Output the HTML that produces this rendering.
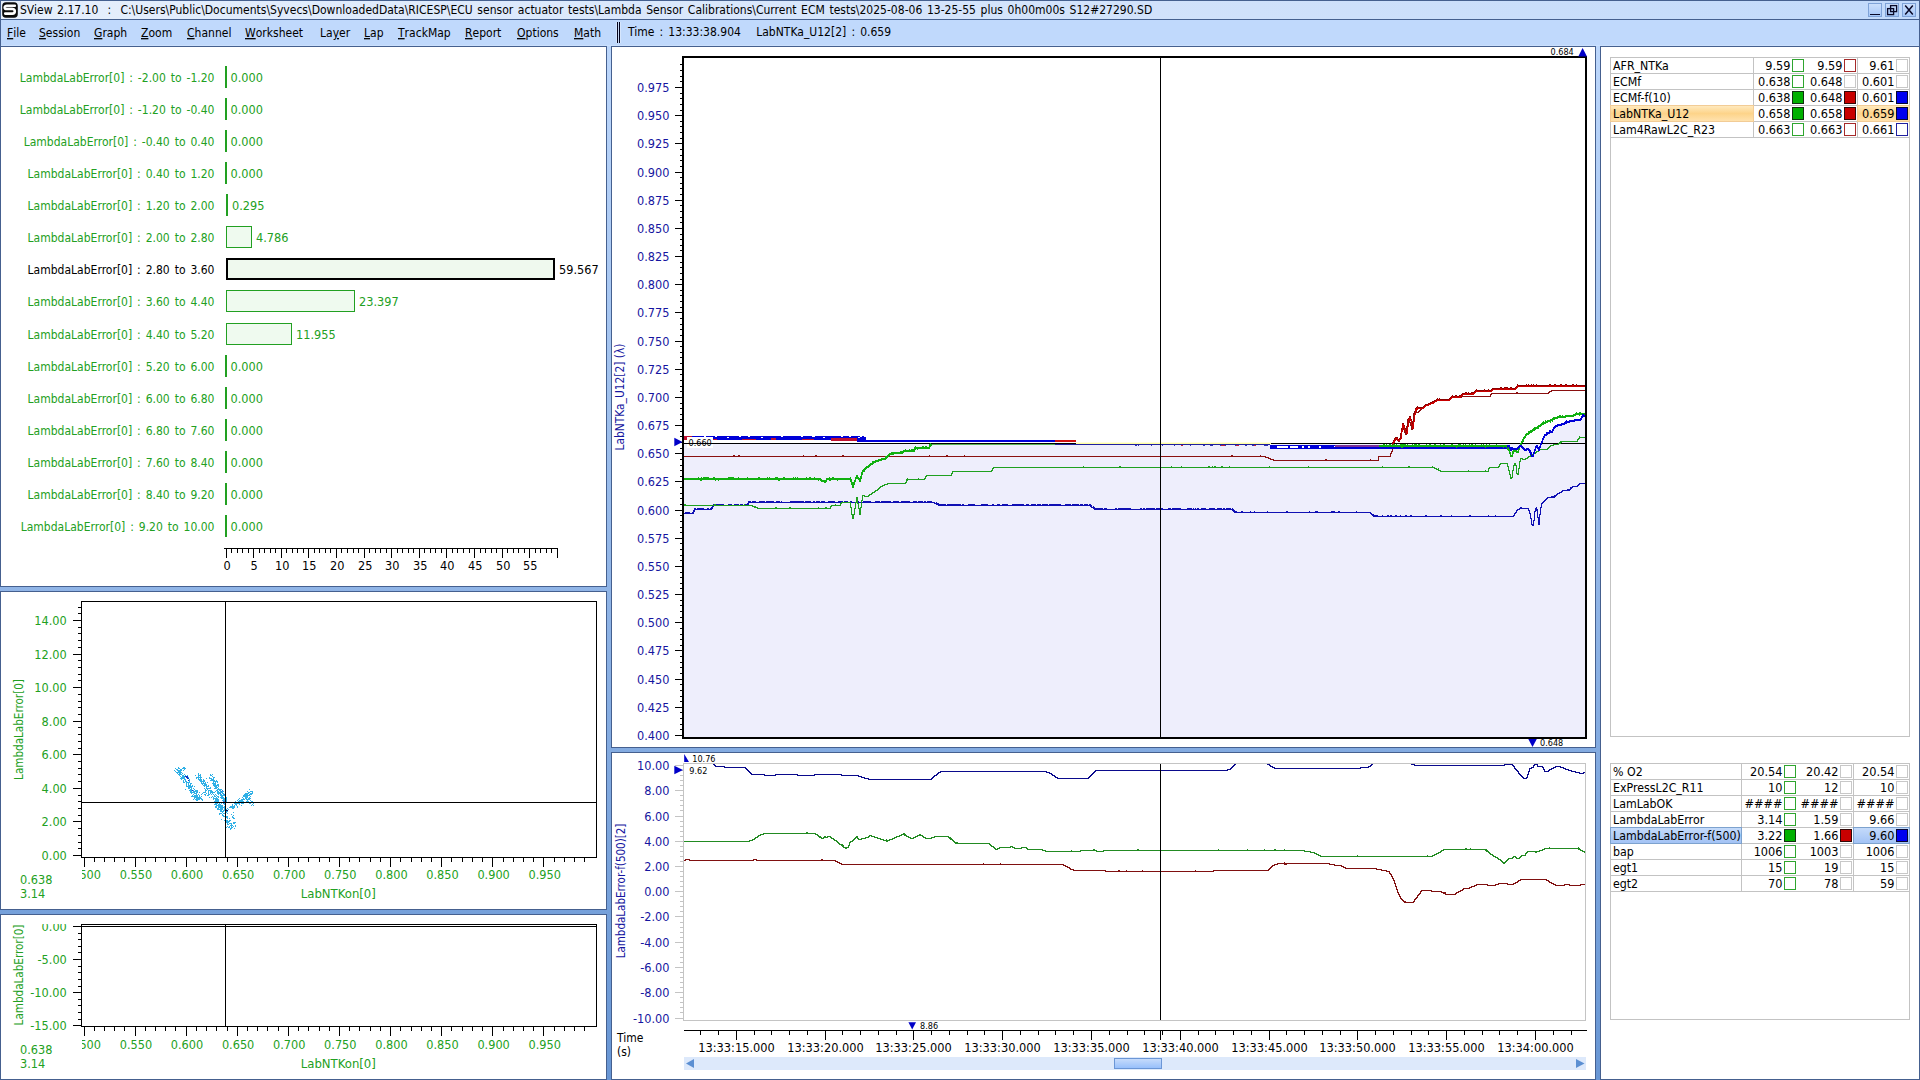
<!DOCTYPE html>
<html lang="en"><head><meta charset="utf-8"><title>SView 2.17.10</title>
<style>
html,body{margin:0;padding:0;background:#6896d4;overflow:hidden}
body{width:1920px;height:1080px}
svg{display:block;font-family:'DejaVu Sans Condensed','DejaVu Sans','Liberation Sans',sans-serif;font-size:13px}
svg rect,svg path{shape-rendering:crispEdges}
svg polyline{shape-rendering:crispEdges}
svg .aa,svg .aa *{shape-rendering:geometricPrecision}
text{white-space:pre}
</style></head><body>
<svg width="1920" height="1080" viewBox="0 0 1920 1080">
<defs>
<linearGradient id="gBg" x1="0" y1="0" x2="0" y2="1"><stop offset="0" stop-color="#bdd7fb"/><stop offset="1" stop-color="#6896d4"/></linearGradient>
<linearGradient id="gTitle" x1="0" y1="0" x2="1" y2="0"><stop offset="0" stop-color="#e6effc"/><stop offset=".55" stop-color="#d3e3fb"/><stop offset="1" stop-color="#c2dafb"/></linearGradient>
<linearGradient id="gBtn" x1="0" y1="0" x2="0" y2="1"><stop offset="0" stop-color="#cbdffc"/><stop offset="1" stop-color="#a6c7f8"/></linearGradient>
<linearGradient id="gThumb" x1="0" y1="0" x2="0" y2="1"><stop offset="0" stop-color="#c6dbfb"/><stop offset="1" stop-color="#98c0fb"/></linearGradient>
<linearGradient id="gOrange" x1="0" y1="0" x2="0" y2="1"><stop offset="0" stop-color="#ffe9bd"/><stop offset=".5" stop-color="#fdd48a"/><stop offset="1" stop-color="#ffe2ae"/></linearGradient>
<linearGradient id="gBlue" x1="0" y1="0" x2="0" y2="1"><stop offset="0" stop-color="#c4dafa"/><stop offset="1" stop-color="#a3c3f5"/></linearGradient>
<clipPath id="clipM"><rect x="684" y="58" width="901" height="679"/></clipPath>
<clipPath id="clipL"><rect x="684" y="764" width="901" height="256"/></clipPath>
<clipPath id="clipS"><rect x="82" y="858" width="520" height="30"/></clipPath>
<clipPath id="clipS2"><rect x="82" y="1027" width="520" height="30"/></clipPath>
<clipPath id="clipT3"><rect x="0" y="924" width="82" height="120"/></clipPath>
</defs>
<rect x="0" y="46" width="1920" height="1034" fill="url(#gBg)"/>
<rect x="0" y="0" width="1920" height="20" fill="#45608f"/>
<rect x="1" y="1" width="1918" height="18" fill="url(#gTitle)"/>
<g class="aa"><rect x="2.2" y="2.2" width="15.6" height="15.6" rx="3.8" fill="#0a0a0a"/>
<path d="M14.8,5.8 H7 C3.9,5.8 3.9,9 7,9 H12.4 C15.6,9 15.6,13.6 12.4,13.6 H5.2" fill="none" stroke="#fff" stroke-width="2.6" stroke-linecap="round"/>
<path d="M5.6,7.4 H12.6" stroke="#8a8a8a" stroke-width=".55" fill="none"/></g>
<text transform="translate(20.00,14.00) scale(0.925,1)" text-anchor="start" fill="#000" font-size="13" word-spacing="1.26">SView 2.17.10  :  C:\Users\Public\Documents\Syvecs\DownloadedData\RICESP\ECU sensor actuator tests\Lambda Sensor Calibrations\Current ECM tests\2025-08-06 13-25-55 plus 0h00m00s S12#27290.SD</text>
<rect x="1868" y="3" width="14" height="14" fill="#7fa3d8"/>
<rect x="1869" y="4" width="12" height="12" fill="url(#gBtn)"/>
<rect x="1885" y="3" width="14" height="14" fill="#7fa3d8"/>
<rect x="1886" y="4" width="12" height="12" fill="url(#gBtn)"/>
<rect x="1902" y="3" width="14" height="14" fill="#7fa3d8"/>
<rect x="1903" y="4" width="12" height="12" fill="url(#gBtn)"/>
<rect x="1870" y="14" width="10" height="1.4" fill="#0a0a28"/>
<g class="aa" fill="none" stroke="#0a0a28" stroke-width="1.3"><rect x="1890.6" y="5.6" width="6" height="6"/><rect x="1887.6" y="8.6" width="6" height="6"/></g>
<path class="aa" d="M1905.2,5.6 L1912.8,14.4 M1912.8,5.6 L1905.2,14.4" stroke="#0a0a28" stroke-width="1.5" fill="none"/>
<rect x="0" y="20" width="1920" height="26" fill="#c0d9fc"/>
<rect x="0" y="20" width="1" height="26" fill="#45608f"/>
<rect x="1919" y="20" width="1" height="26" fill="#45608f"/>
<rect x="1" y="45" width="1918" height="1" fill="#cbe0fd"/>
<text transform="translate(7,37) scale(0.925,1)" font-size="13" fill="#000"><tspan text-decoration="underline">F</tspan>ile</text>
<text transform="translate(39,37) scale(0.925,1)" font-size="13" fill="#000"><tspan text-decoration="underline">S</tspan>ession</text>
<text transform="translate(94,37) scale(0.925,1)" font-size="13" fill="#000"><tspan text-decoration="underline">G</tspan>raph</text>
<text transform="translate(141,37) scale(0.925,1)" font-size="13" fill="#000"><tspan text-decoration="underline">Z</tspan>oom</text>
<text transform="translate(187,37) scale(0.925,1)" font-size="13" fill="#000"><tspan text-decoration="underline">C</tspan>hannel</text>
<text transform="translate(245,37) scale(0.925,1)" font-size="13" fill="#000"><tspan text-decoration="underline">W</tspan>orksheet</text>
<text transform="translate(320,37) scale(0.925,1)" font-size="13" fill="#000">La<tspan text-decoration="underline">y</tspan>er</text>
<text transform="translate(364,37) scale(0.925,1)" font-size="13" fill="#000"><tspan text-decoration="underline">L</tspan>ap</text>
<text transform="translate(398,37) scale(0.925,1)" font-size="13" fill="#000"><tspan text-decoration="underline">T</tspan>rackMap</text>
<text transform="translate(465,37) scale(0.925,1)" font-size="13" fill="#000"><tspan text-decoration="underline">R</tspan>eport</text>
<text transform="translate(517,37) scale(0.925,1)" font-size="13" fill="#000"><tspan text-decoration="underline">O</tspan>ptions</text>
<text transform="translate(574,37) scale(0.925,1)" font-size="13" fill="#000"><tspan text-decoration="underline">M</tspan>ath</text>
<rect x="616" y="22" width="1" height="21" fill="#d6e6fd"/>
<rect x="617" y="22" width="1" height="21" fill="#05051e"/>
<rect x="618" y="22" width="1" height="21" fill="#c9d9f2"/>
<rect x="619" y="22" width="1" height="21" fill="#05051e"/>
<rect x="620" y="22" width="1" height="21" fill="#d6e6fd"/>
<text transform="translate(628.00,36.00) scale(0.925,1)" text-anchor="start" fill="#000" font-size="13" word-spacing="1.8">Time : 13:33:38.904   LabNTKa_U12[2] : 0.659</text>
<rect x="0" y="46" width="607" height="541" fill="#45608f"/>
<rect x="1" y="47" width="605" height="539" fill="#fff"/>
<text transform="translate(214.50,82.00) scale(0.925,1)" text-anchor="end" fill="#22a022" font-size="13" word-spacing="1.6">LambdaLabError[0] : -2.00 to -1.20</text>
<rect x="225" y="66" width="2" height="22" fill="#22a022"/>
<text transform="translate(230.50,82.00) scale(0.97,1)" text-anchor="start" fill="#22a022" font-size="13">0.000</text>
<text transform="translate(214.50,114.00) scale(0.925,1)" text-anchor="end" fill="#22a022" font-size="13" word-spacing="1.6">LambdaLabError[0] : -1.20 to -0.40</text>
<rect x="225" y="98" width="2" height="22" fill="#22a022"/>
<text transform="translate(230.50,114.00) scale(0.97,1)" text-anchor="start" fill="#22a022" font-size="13">0.000</text>
<text transform="translate(214.50,146.00) scale(0.925,1)" text-anchor="end" fill="#22a022" font-size="13" word-spacing="1.6">LambdaLabError[0] : -0.40 to 0.40</text>
<rect x="225" y="130" width="2" height="22" fill="#22a022"/>
<text transform="translate(230.50,146.00) scale(0.97,1)" text-anchor="start" fill="#22a022" font-size="13">0.000</text>
<text transform="translate(214.50,178.00) scale(0.925,1)" text-anchor="end" fill="#22a022" font-size="13" word-spacing="1.6">LambdaLabError[0] : 0.40 to 1.20</text>
<rect x="225" y="162" width="2" height="22" fill="#22a022"/>
<text transform="translate(230.50,178.00) scale(0.97,1)" text-anchor="start" fill="#22a022" font-size="13">0.000</text>
<text transform="translate(214.50,210.00) scale(0.925,1)" text-anchor="end" fill="#22a022" font-size="13" word-spacing="1.6">LambdaLabError[0] : 1.20 to 2.00</text>
<rect x="226" y="194" width="2" height="22" fill="#22a022"/>
<text transform="translate(232.00,210.00) scale(0.97,1)" text-anchor="start" fill="#22a022" font-size="13">0.295</text>
<text transform="translate(214.50,242.00) scale(0.925,1)" text-anchor="end" fill="#22a022" font-size="13" word-spacing="1.6">LambdaLabError[0] : 2.00 to 2.80</text>
<rect x="226" y="226" width="26" height="22" fill="#22a022"/>
<rect x="227" y="227" width="24" height="20" fill="#effaef"/>
<text transform="translate(256.00,242.00) scale(0.97,1)" text-anchor="start" fill="#22a022" font-size="13">4.786</text>
<text transform="translate(214.50,274.00) scale(0.925,1)" text-anchor="end" fill="#000" font-size="13" word-spacing="1.6">LambdaLabError[0] : 2.80 to 3.60</text>
<rect x="226" y="258" width="329" height="22" fill="#000"/>
<rect x="228" y="260" width="325" height="18" fill="#eff9ee"/>
<text transform="translate(559.00,274.00) scale(0.97,1)" text-anchor="start" fill="#000" font-size="13">59.567</text>
<text transform="translate(214.50,306.00) scale(0.925,1)" text-anchor="end" fill="#22a022" font-size="13" word-spacing="1.6">LambdaLabError[0] : 3.60 to 4.40</text>
<rect x="226" y="290" width="129" height="22" fill="#22a022"/>
<rect x="227" y="291" width="127" height="20" fill="#effaef"/>
<text transform="translate(359.00,306.00) scale(0.97,1)" text-anchor="start" fill="#22a022" font-size="13">23.397</text>
<text transform="translate(214.50,339.00) scale(0.925,1)" text-anchor="end" fill="#22a022" font-size="13" word-spacing="1.6">LambdaLabError[0] : 4.40 to 5.20</text>
<rect x="226" y="323" width="66" height="22" fill="#22a022"/>
<rect x="227" y="324" width="64" height="20" fill="#effaef"/>
<text transform="translate(296.00,339.00) scale(0.97,1)" text-anchor="start" fill="#22a022" font-size="13">11.955</text>
<text transform="translate(214.50,371.00) scale(0.925,1)" text-anchor="end" fill="#22a022" font-size="13" word-spacing="1.6">LambdaLabError[0] : 5.20 to 6.00</text>
<rect x="225" y="355" width="2" height="22" fill="#22a022"/>
<text transform="translate(230.50,371.00) scale(0.97,1)" text-anchor="start" fill="#22a022" font-size="13">0.000</text>
<text transform="translate(214.50,403.00) scale(0.925,1)" text-anchor="end" fill="#22a022" font-size="13" word-spacing="1.6">LambdaLabError[0] : 6.00 to 6.80</text>
<rect x="225" y="387" width="2" height="22" fill="#22a022"/>
<text transform="translate(230.50,403.00) scale(0.97,1)" text-anchor="start" fill="#22a022" font-size="13">0.000</text>
<text transform="translate(214.50,435.00) scale(0.925,1)" text-anchor="end" fill="#22a022" font-size="13" word-spacing="1.6">LambdaLabError[0] : 6.80 to 7.60</text>
<rect x="225" y="419" width="2" height="22" fill="#22a022"/>
<text transform="translate(230.50,435.00) scale(0.97,1)" text-anchor="start" fill="#22a022" font-size="13">0.000</text>
<text transform="translate(214.50,467.00) scale(0.925,1)" text-anchor="end" fill="#22a022" font-size="13" word-spacing="1.6">LambdaLabError[0] : 7.60 to 8.40</text>
<rect x="225" y="451" width="2" height="22" fill="#22a022"/>
<text transform="translate(230.50,467.00) scale(0.97,1)" text-anchor="start" fill="#22a022" font-size="13">0.000</text>
<text transform="translate(214.50,499.00) scale(0.925,1)" text-anchor="end" fill="#22a022" font-size="13" word-spacing="1.6">LambdaLabError[0] : 8.40 to 9.20</text>
<rect x="225" y="483" width="2" height="22" fill="#22a022"/>
<text transform="translate(230.50,499.00) scale(0.97,1)" text-anchor="start" fill="#22a022" font-size="13">0.000</text>
<text transform="translate(214.50,531.00) scale(0.925,1)" text-anchor="end" fill="#22a022" font-size="13" word-spacing="1.6">LambdaLabError[0] : 9.20 to 10.00</text>
<rect x="225" y="515" width="2" height="22" fill="#22a022"/>
<text transform="translate(230.50,531.00) scale(0.97,1)" text-anchor="start" fill="#22a022" font-size="13">0.000</text>
<rect x="224" y="548" width="334" height="1" fill="#000"/>
<rect x="226" y="548" width="1" height="10" fill="#000"/>
<text transform="translate(227.20,570.00) scale(0.97,1)" text-anchor="middle" fill="#000" font-size="13">0</text>
<rect x="231" y="548" width="1" height="5" fill="#000"/>
<rect x="237" y="548" width="1" height="5" fill="#000"/>
<rect x="242" y="548" width="1" height="5" fill="#000"/>
<rect x="248" y="548" width="1" height="5" fill="#000"/>
<rect x="253" y="548" width="1" height="10" fill="#000"/>
<text transform="translate(254.20,570.00) scale(0.97,1)" text-anchor="middle" fill="#000" font-size="13">5</text>
<rect x="259" y="548" width="1" height="5" fill="#000"/>
<rect x="264" y="548" width="1" height="5" fill="#000"/>
<rect x="270" y="548" width="1" height="5" fill="#000"/>
<rect x="275" y="548" width="1" height="5" fill="#000"/>
<rect x="281" y="548" width="1" height="10" fill="#000"/>
<text transform="translate(282.20,570.00) scale(0.97,1)" text-anchor="middle" fill="#000" font-size="13">10</text>
<rect x="286" y="548" width="1" height="5" fill="#000"/>
<rect x="292" y="548" width="1" height="5" fill="#000"/>
<rect x="297" y="548" width="1" height="5" fill="#000"/>
<rect x="303" y="548" width="1" height="5" fill="#000"/>
<rect x="308" y="548" width="1" height="10" fill="#000"/>
<text transform="translate(309.20,570.00) scale(0.97,1)" text-anchor="middle" fill="#000" font-size="13">15</text>
<rect x="314" y="548" width="1" height="5" fill="#000"/>
<rect x="319" y="548" width="1" height="5" fill="#000"/>
<rect x="325" y="548" width="1" height="5" fill="#000"/>
<rect x="330" y="548" width="1" height="5" fill="#000"/>
<rect x="336" y="548" width="1" height="10" fill="#000"/>
<text transform="translate(337.20,570.00) scale(0.97,1)" text-anchor="middle" fill="#000" font-size="13">20</text>
<rect x="341" y="548" width="1" height="5" fill="#000"/>
<rect x="347" y="548" width="1" height="5" fill="#000"/>
<rect x="353" y="548" width="1" height="5" fill="#000"/>
<rect x="358" y="548" width="1" height="5" fill="#000"/>
<rect x="364" y="548" width="1" height="10" fill="#000"/>
<text transform="translate(365.20,570.00) scale(0.97,1)" text-anchor="middle" fill="#000" font-size="13">25</text>
<rect x="369" y="548" width="1" height="5" fill="#000"/>
<rect x="375" y="548" width="1" height="5" fill="#000"/>
<rect x="380" y="548" width="1" height="5" fill="#000"/>
<rect x="386" y="548" width="1" height="5" fill="#000"/>
<rect x="391" y="548" width="1" height="10" fill="#000"/>
<text transform="translate(392.20,570.00) scale(0.97,1)" text-anchor="middle" fill="#000" font-size="13">30</text>
<rect x="397" y="548" width="1" height="5" fill="#000"/>
<rect x="402" y="548" width="1" height="5" fill="#000"/>
<rect x="408" y="548" width="1" height="5" fill="#000"/>
<rect x="413" y="548" width="1" height="5" fill="#000"/>
<rect x="419" y="548" width="1" height="10" fill="#000"/>
<text transform="translate(420.20,570.00) scale(0.97,1)" text-anchor="middle" fill="#000" font-size="13">35</text>
<rect x="424" y="548" width="1" height="5" fill="#000"/>
<rect x="430" y="548" width="1" height="5" fill="#000"/>
<rect x="435" y="548" width="1" height="5" fill="#000"/>
<rect x="441" y="548" width="1" height="5" fill="#000"/>
<rect x="446" y="548" width="1" height="10" fill="#000"/>
<text transform="translate(447.20,570.00) scale(0.97,1)" text-anchor="middle" fill="#000" font-size="13">40</text>
<rect x="452" y="548" width="1" height="5" fill="#000"/>
<rect x="457" y="548" width="1" height="5" fill="#000"/>
<rect x="463" y="548" width="1" height="5" fill="#000"/>
<rect x="469" y="548" width="1" height="5" fill="#000"/>
<rect x="474" y="548" width="1" height="10" fill="#000"/>
<text transform="translate(475.20,570.00) scale(0.97,1)" text-anchor="middle" fill="#000" font-size="13">45</text>
<rect x="480" y="548" width="1" height="5" fill="#000"/>
<rect x="485" y="548" width="1" height="5" fill="#000"/>
<rect x="491" y="548" width="1" height="5" fill="#000"/>
<rect x="496" y="548" width="1" height="5" fill="#000"/>
<rect x="502" y="548" width="1" height="10" fill="#000"/>
<text transform="translate(503.20,570.00) scale(0.97,1)" text-anchor="middle" fill="#000" font-size="13">50</text>
<rect x="507" y="548" width="1" height="5" fill="#000"/>
<rect x="513" y="548" width="1" height="5" fill="#000"/>
<rect x="518" y="548" width="1" height="5" fill="#000"/>
<rect x="524" y="548" width="1" height="5" fill="#000"/>
<rect x="529" y="548" width="1" height="10" fill="#000"/>
<text transform="translate(530.20,570.00) scale(0.97,1)" text-anchor="middle" fill="#000" font-size="13">55</text>
<rect x="535" y="548" width="1" height="5" fill="#000"/>
<rect x="540" y="548" width="1" height="5" fill="#000"/>
<rect x="546" y="548" width="1" height="5" fill="#000"/>
<rect x="551" y="548" width="1" height="5" fill="#000"/>
<rect x="557" y="548" width="1" height="10" fill="#000"/>
<rect x="0" y="591" width="607" height="319" fill="#45608f"/>
<rect x="1" y="592" width="605" height="317" fill="#fff"/>
<rect x="81" y="601" width="516" height="257" fill="#000"/>
<rect x="82" y="602" width="514" height="255" fill="#fff"/>
<rect x="73" y="855" width="8" height="1" fill="#000"/>
<text transform="translate(66.80,860.00) scale(0.97,1)" text-anchor="end" fill="#22a022" font-size="13">0.00</text>
<rect x="78" y="848" width="3" height="1" fill="#000"/>
<rect x="78" y="842" width="3" height="1" fill="#000"/>
<rect x="78" y="835" width="3" height="1" fill="#000"/>
<rect x="78" y="828" width="3" height="1" fill="#000"/>
<rect x="73" y="821" width="8" height="1" fill="#000"/>
<text transform="translate(66.80,826.00) scale(0.97,1)" text-anchor="end" fill="#22a022" font-size="13">2.00</text>
<rect x="78" y="815" width="3" height="1" fill="#000"/>
<rect x="78" y="808" width="3" height="1" fill="#000"/>
<rect x="78" y="801" width="3" height="1" fill="#000"/>
<rect x="78" y="795" width="3" height="1" fill="#000"/>
<rect x="73" y="788" width="8" height="1" fill="#000"/>
<text transform="translate(66.80,793.00) scale(0.97,1)" text-anchor="end" fill="#22a022" font-size="13">4.00</text>
<rect x="78" y="781" width="3" height="1" fill="#000"/>
<rect x="78" y="774" width="3" height="1" fill="#000"/>
<rect x="78" y="768" width="3" height="1" fill="#000"/>
<rect x="78" y="761" width="3" height="1" fill="#000"/>
<rect x="73" y="754" width="8" height="1" fill="#000"/>
<text transform="translate(66.80,759.00) scale(0.97,1)" text-anchor="end" fill="#22a022" font-size="13">6.00</text>
<rect x="78" y="748" width="3" height="1" fill="#000"/>
<rect x="78" y="741" width="3" height="1" fill="#000"/>
<rect x="78" y="734" width="3" height="1" fill="#000"/>
<rect x="78" y="727" width="3" height="1" fill="#000"/>
<rect x="73" y="721" width="8" height="1" fill="#000"/>
<text transform="translate(66.80,726.00) scale(0.97,1)" text-anchor="end" fill="#22a022" font-size="13">8.00</text>
<rect x="78" y="714" width="3" height="1" fill="#000"/>
<rect x="78" y="707" width="3" height="1" fill="#000"/>
<rect x="78" y="701" width="3" height="1" fill="#000"/>
<rect x="78" y="694" width="3" height="1" fill="#000"/>
<rect x="73" y="687" width="8" height="1" fill="#000"/>
<text transform="translate(66.80,692.00) scale(0.97,1)" text-anchor="end" fill="#22a022" font-size="13">10.00</text>
<rect x="78" y="680" width="3" height="1" fill="#000"/>
<rect x="78" y="674" width="3" height="1" fill="#000"/>
<rect x="78" y="667" width="3" height="1" fill="#000"/>
<rect x="78" y="660" width="3" height="1" fill="#000"/>
<rect x="73" y="654" width="8" height="1" fill="#000"/>
<text transform="translate(66.80,659.00) scale(0.97,1)" text-anchor="end" fill="#22a022" font-size="13">12.00</text>
<rect x="78" y="647" width="3" height="1" fill="#000"/>
<rect x="78" y="640" width="3" height="1" fill="#000"/>
<rect x="78" y="633" width="3" height="1" fill="#000"/>
<rect x="78" y="627" width="3" height="1" fill="#000"/>
<rect x="73" y="620" width="8" height="1" fill="#000"/>
<text transform="translate(66.80,625.00) scale(0.97,1)" text-anchor="end" fill="#22a022" font-size="13">14.00</text>
<rect x="78" y="613" width="3" height="1" fill="#000"/>
<rect x="78" y="607" width="3" height="1" fill="#000"/>
<rect x="84" y="858" width="1" height="9" fill="#000"/>
<rect x="94" y="858" width="1" height="4" fill="#000"/>
<rect x="104" y="858" width="1" height="4" fill="#000"/>
<rect x="114" y="858" width="1" height="4" fill="#000"/>
<rect x="124" y="858" width="1" height="4" fill="#000"/>
<rect x="135" y="858" width="1" height="9" fill="#000"/>
<rect x="145" y="858" width="1" height="4" fill="#000"/>
<rect x="155" y="858" width="1" height="4" fill="#000"/>
<rect x="165" y="858" width="1" height="4" fill="#000"/>
<rect x="175" y="858" width="1" height="4" fill="#000"/>
<rect x="186" y="858" width="1" height="9" fill="#000"/>
<rect x="196" y="858" width="1" height="4" fill="#000"/>
<rect x="206" y="858" width="1" height="4" fill="#000"/>
<rect x="216" y="858" width="1" height="4" fill="#000"/>
<rect x="227" y="858" width="1" height="4" fill="#000"/>
<rect x="237" y="858" width="1" height="9" fill="#000"/>
<rect x="247" y="858" width="1" height="4" fill="#000"/>
<rect x="257" y="858" width="1" height="4" fill="#000"/>
<rect x="267" y="858" width="1" height="4" fill="#000"/>
<rect x="278" y="858" width="1" height="4" fill="#000"/>
<rect x="288" y="858" width="1" height="9" fill="#000"/>
<rect x="298" y="858" width="1" height="4" fill="#000"/>
<rect x="308" y="858" width="1" height="4" fill="#000"/>
<rect x="319" y="858" width="1" height="4" fill="#000"/>
<rect x="329" y="858" width="1" height="4" fill="#000"/>
<rect x="339" y="858" width="1" height="9" fill="#000"/>
<rect x="349" y="858" width="1" height="4" fill="#000"/>
<rect x="359" y="858" width="1" height="4" fill="#000"/>
<rect x="370" y="858" width="1" height="4" fill="#000"/>
<rect x="380" y="858" width="1" height="4" fill="#000"/>
<rect x="390" y="858" width="1" height="9" fill="#000"/>
<rect x="400" y="858" width="1" height="4" fill="#000"/>
<rect x="411" y="858" width="1" height="4" fill="#000"/>
<rect x="421" y="858" width="1" height="4" fill="#000"/>
<rect x="431" y="858" width="1" height="4" fill="#000"/>
<rect x="441" y="858" width="1" height="9" fill="#000"/>
<rect x="451" y="858" width="1" height="4" fill="#000"/>
<rect x="462" y="858" width="1" height="4" fill="#000"/>
<rect x="472" y="858" width="1" height="4" fill="#000"/>
<rect x="482" y="858" width="1" height="4" fill="#000"/>
<rect x="492" y="858" width="1" height="9" fill="#000"/>
<rect x="503" y="858" width="1" height="4" fill="#000"/>
<rect x="513" y="858" width="1" height="4" fill="#000"/>
<rect x="523" y="858" width="1" height="4" fill="#000"/>
<rect x="533" y="858" width="1" height="4" fill="#000"/>
<rect x="543" y="858" width="1" height="9" fill="#000"/>
<rect x="554" y="858" width="1" height="4" fill="#000"/>
<rect x="564" y="858" width="1" height="4" fill="#000"/>
<rect x="574" y="858" width="1" height="4" fill="#000"/>
<rect x="584" y="858" width="1" height="4" fill="#000"/>
<g clip-path="url(#clipS)">
<text transform="translate(84.80,879.00) scale(0.97,1)" text-anchor="middle" fill="#22a022" font-size="13">0.500</text>
<text transform="translate(135.90,879.00) scale(0.97,1)" text-anchor="middle" fill="#22a022" font-size="13">0.550</text>
<text transform="translate(187.00,879.00) scale(0.97,1)" text-anchor="middle" fill="#22a022" font-size="13">0.600</text>
<text transform="translate(238.10,879.00) scale(0.97,1)" text-anchor="middle" fill="#22a022" font-size="13">0.650</text>
<text transform="translate(289.20,879.00) scale(0.97,1)" text-anchor="middle" fill="#22a022" font-size="13">0.700</text>
<text transform="translate(340.30,879.00) scale(0.97,1)" text-anchor="middle" fill="#22a022" font-size="13">0.750</text>
<text transform="translate(391.40,879.00) scale(0.97,1)" text-anchor="middle" fill="#22a022" font-size="13">0.800</text>
<text transform="translate(442.50,879.00) scale(0.97,1)" text-anchor="middle" fill="#22a022" font-size="13">0.850</text>
<text transform="translate(493.60,879.00) scale(0.97,1)" text-anchor="middle" fill="#22a022" font-size="13">0.900</text>
<text transform="translate(544.70,879.00) scale(0.97,1)" text-anchor="middle" fill="#22a022" font-size="13">0.950</text>
</g>
<text transform="translate(20.00,884.00) scale(0.97,1)" text-anchor="start" fill="#22a022" font-size="13">0.638</text>
<text transform="translate(20.00,898.00) scale(0.97,1)" text-anchor="start" fill="#22a022" font-size="13">3.14</text>
<text transform="translate(338.30,898.00) scale(1.0,1)" text-anchor="middle" fill="#22a022" font-size="13">LabNTKon[0]</text>
<text transform="translate(23.10,729.50) rotate(-90) scale(0.892,1)" text-anchor="middle" fill="#22a022" font-size="13">LambdaLabError[0]</text>
<path fill="#2fb0e6" d="M185,780h1v1h-1zM177,770h1v1h-1zM178,770h1v1h-1zM187,782h1v1h-1zM186,781h1v1h-1zM179,772h1v1h-1zM185,789h1v1h-1zM179,768h1v1h-1zM181,774h1v1h-1zM195,796h1v1h-1zM189,790h1v1h-1zM179,770h1v1h-1zM190,790h1v1h-1zM188,787h1v1h-1zM193,792h1v1h-1zM186,786h1v1h-1zM191,796h1v1h-1zM177,773h1v1h-1zM180,773h1v1h-1zM191,787h1v1h-1zM194,798h1v1h-1zM188,786h1v1h-1zM196,794h1v1h-1zM193,790h1v1h-1zM194,789h1v1h-1zM181,779h1v1h-1zM176,769h1v1h-1zM182,773h1v1h-1zM180,774h1v1h-1zM197,797h1v1h-1zM191,783h1v1h-1zM195,797h1v1h-1zM188,777h1v1h-1zM180,776h1v1h-1zM184,776h1v1h-1zM181,778h1v1h-1zM195,791h1v1h-1zM196,791h1v1h-1zM185,781h1v1h-1zM191,789h1v1h-1zM182,776h1v1h-1zM195,795h1v1h-1zM181,777h1v1h-1zM183,768h1v1h-1zM186,783h1v1h-1zM178,772h1v1h-1zM196,798h1v1h-1zM190,786h1v1h-1zM199,797h1v1h-1zM182,777h1v1h-1zM190,792h1v1h-1zM184,782h1v1h-1zM200,797h1v1h-1zM194,793h1v1h-1zM188,785h1v1h-1zM201,798h1v1h-1zM197,795h1v1h-1zM191,788h1v1h-1zM193,788h1v1h-1zM192,792h1v1h-1zM192,796h1v1h-1zM196,800h1v1h-1zM182,775h1v1h-1zM196,796h1v1h-1zM197,798h1v1h-1zM189,786h1v1h-1zM196,797h1v1h-1zM193,799h1v1h-1zM183,780h1v1h-1zM195,799h1v1h-1zM191,786h1v1h-1zM194,797h1v1h-1zM190,785h1v1h-1zM184,774h1v1h-1zM178,774h1v1h-1zM188,788h1v1h-1zM189,785h1v1h-1zM189,787h1v1h-1zM191,793h1v1h-1zM190,791h1v1h-1zM189,782h1v1h-1zM197,796h1v1h-1zM192,785h1v1h-1zM179,771h1v1h-1zM192,786h1v1h-1zM180,771h1v1h-1zM183,770h1v1h-1zM183,775h1v1h-1zM190,783h1v1h-1zM179,774h1v1h-1zM194,791h1v1h-1zM188,782h1v1h-1zM189,788h1v1h-1zM199,795h1v1h-1zM193,794h1v1h-1zM189,780h1v1h-1zM185,779h1v1h-1zM178,768h1v1h-1zM181,769h1v1h-1zM180,769h1v1h-1zM180,778h1v1h-1zM184,778h1v1h-1zM183,776h1v1h-1zM178,771h1v1h-1zM177,769h1v1h-1zM191,791h1v1h-1zM188,783h1v1h-1zM192,795h1v1h-1zM193,796h1v1h-1zM194,792h1v1h-1zM183,777h1v1h-1zM196,793h1v1h-1zM183,778h1v1h-1zM188,784h1v1h-1zM187,775h1v1h-1zM183,781h1v1h-1zM184,777h1v1h-1zM191,790h1v1h-1zM199,802h1v1h-1zM194,795h1v1h-1zM189,781h1v1h-1zM190,784h1v1h-1zM191,792h1v1h-1zM196,799h1v1h-1zM190,787h1v1h-1zM186,785h1v1h-1zM198,799h1v1h-1zM189,779h1v1h-1zM186,784h1v1h-1zM197,800h1v1h-1zM176,772h1v1h-1zM181,770h1v1h-1zM175,768h1v1h-1zM184,779h1v1h-1zM193,791h1v1h-1zM182,778h1v1h-1zM197,799h1v1h-1zM186,782h1v1h-1zM180,770h1v1h-1zM194,786h1v1h-1zM190,789h1v1h-1zM183,782h1v1h-1zM197,802h1v1h-1zM198,797h1v1h-1zM179,775h1v1h-1zM187,786h1v1h-1zM177,772h1v1h-1zM199,796h1v1h-1zM174,770h1v1h-1zM197,791h1v1h-1zM181,772h1v1h-1zM194,796h1v1h-1zM185,775h1v1h-1zM182,768h1v1h-1zM184,769h1v1h-1zM185,768h1v1h-1zM180,772h1v1h-1zM184,768h1v1h-1zM184,767h1v1h-1zM175,771h1v1h-1zM183,767h1v1h-1zM178,767h1v1h-1zM179,773h1v1h-1zM201,796h1v1h-1zM202,800h1v1h-1zM201,794h1v1h-1zM198,794h1v1h-1zM195,793h1v1h-1zM201,799h1v1h-1zM196,792h1v1h-1zM196,790h1v1h-1zM197,790h1v1h-1zM198,798h1v1h-1zM199,792h1v1h-1zM202,799h1v1h-1zM196,795h1v1h-1zM199,799h1v1h-1zM200,798h1v1h-1zM197,792h1v1h-1zM199,798h1v1h-1zM195,790h1v1h-1zM200,780h1v1h-1zM206,778h1v1h-1zM203,783h1v1h-1zM203,779h1v1h-1zM204,781h1v1h-1zM208,790h1v1h-1zM195,775h1v1h-1zM212,792h1v1h-1zM201,781h1v1h-1zM198,779h1v1h-1zM196,777h1v1h-1zM211,792h1v1h-1zM212,791h1v1h-1zM199,775h1v1h-1zM208,788h1v1h-1zM199,777h1v1h-1zM204,780h1v1h-1zM204,784h1v1h-1zM200,776h1v1h-1zM198,775h1v1h-1zM203,785h1v1h-1zM200,781h1v1h-1zM202,781h1v1h-1zM205,783h1v1h-1zM204,786h1v1h-1zM207,789h1v1h-1zM204,783h1v1h-1zM206,784h1v1h-1zM198,774h1v1h-1zM203,781h1v1h-1zM211,790h1v1h-1zM210,793h1v1h-1zM207,782h1v1h-1zM200,774h1v1h-1zM196,778h1v1h-1zM200,777h1v1h-1zM210,790h1v1h-1zM210,792h1v1h-1zM207,786h1v1h-1zM209,790h1v1h-1zM204,788h1v1h-1zM202,783h1v1h-1zM201,777h1v1h-1zM210,791h1v1h-1zM207,788h1v1h-1zM210,788h1v1h-1zM198,776h1v1h-1zM205,784h1v1h-1zM206,786h1v1h-1zM203,782h1v1h-1zM198,778h1v1h-1zM201,779h1v1h-1zM203,780h1v1h-1zM205,782h1v1h-1zM204,785h1v1h-1zM198,777h1v1h-1zM206,785h1v1h-1zM198,773h1v1h-1zM201,780h1v1h-1zM208,785h1v1h-1zM199,779h1v1h-1zM200,775h1v1h-1zM206,790h1v1h-1zM202,784h1v1h-1zM208,792h1v1h-1zM208,786h1v1h-1zM206,787h1v1h-1zM200,778h1v1h-1zM205,785h1v1h-1zM209,788h1v1h-1zM200,779h1v1h-1zM210,787h1v1h-1zM199,780h1v1h-1zM197,777h1v1h-1zM206,788h1v1h-1zM208,791h1v1h-1zM211,791h1v1h-1zM201,783h1v1h-1zM208,793h1v1h-1zM201,782h1v1h-1zM205,789h1v1h-1zM208,795h1v1h-1zM204,794h1v1h-1zM205,790h1v1h-1zM205,794h1v1h-1zM205,795h1v1h-1zM204,792h1v1h-1zM209,794h1v1h-1zM206,793h1v1h-1zM208,794h1v1h-1zM203,792h1v1h-1zM209,797h1v1h-1zM205,792h1v1h-1zM207,795h1v1h-1zM211,797h1v1h-1zM202,793h1v1h-1zM205,791h1v1h-1zM217,784h1v1h-1zM216,787h1v1h-1zM211,779h1v1h-1zM223,794h1v1h-1zM219,789h1v1h-1zM213,778h1v1h-1zM221,792h1v1h-1zM219,792h1v1h-1zM214,783h1v1h-1zM219,793h1v1h-1zM216,786h1v1h-1zM220,791h1v1h-1zM218,788h1v1h-1zM220,792h1v1h-1zM223,799h1v1h-1zM216,790h1v1h-1zM215,791h1v1h-1zM213,780h1v1h-1zM225,798h1v1h-1zM217,785h1v1h-1zM218,786h1v1h-1zM216,785h1v1h-1zM214,785h1v1h-1zM221,797h1v1h-1zM212,776h1v1h-1zM217,792h1v1h-1zM215,781h1v1h-1zM221,789h1v1h-1zM213,783h1v1h-1zM210,775h1v1h-1zM213,784h1v1h-1zM215,785h1v1h-1zM218,784h1v1h-1zM212,774h1v1h-1zM224,798h1v1h-1zM224,799h1v1h-1zM212,779h1v1h-1zM221,796h1v1h-1zM222,791h1v1h-1zM222,798h1v1h-1zM215,783h1v1h-1zM210,778h1v1h-1zM215,788h1v1h-1zM226,798h1v1h-1zM215,787h1v1h-1zM221,798h1v1h-1zM226,801h1v1h-1zM222,792h1v1h-1zM223,800h1v1h-1zM226,799h1v1h-1zM218,794h1v1h-1zM222,797h1v1h-1zM214,786h1v1h-1zM215,782h1v1h-1zM217,790h1v1h-1zM223,798h1v1h-1zM217,789h1v1h-1zM210,774h1v1h-1zM219,790h1v1h-1zM211,780h1v1h-1zM218,789h1v1h-1zM221,795h1v1h-1zM217,787h1v1h-1zM223,795h1v1h-1zM213,785h1v1h-1zM226,800h1v1h-1zM213,779h1v1h-1zM220,790h1v1h-1zM209,778h1v1h-1zM213,782h1v1h-1zM227,802h1v1h-1zM214,780h1v1h-1zM214,781h1v1h-1zM211,775h1v1h-1zM223,797h1v1h-1zM224,803h1v1h-1zM221,794h1v1h-1zM214,784h1v1h-1zM222,795h1v1h-1zM214,788h1v1h-1zM218,785h1v1h-1zM218,793h1v1h-1zM222,800h1v1h-1zM224,795h1v1h-1zM216,781h1v1h-1zM209,777h1v1h-1zM213,777h1v1h-1zM212,780h1v1h-1zM222,793h1v1h-1zM210,780h1v1h-1zM217,791h1v1h-1zM217,781h1v1h-1zM214,777h1v1h-1zM216,788h1v1h-1zM218,797h1v1h-1zM223,791h1v1h-1zM213,781h1v1h-1zM220,789h1v1h-1zM225,799h1v1h-1zM218,791h1v1h-1zM224,802h1v1h-1zM215,786h1v1h-1zM211,778h1v1h-1zM226,797h1v1h-1zM220,795h1v1h-1zM222,796h1v1h-1zM215,784h1v1h-1zM223,793h1v1h-1zM217,782h1v1h-1zM216,780h1v1h-1zM224,800h1v1h-1zM218,792h1v1h-1zM220,797h1v1h-1zM220,794h1v1h-1zM212,783h1v1h-1zM219,804h1v1h-1zM234,828h1v1h-1zM225,818h1v1h-1zM218,805h1v1h-1zM225,806h1v1h-1zM231,826h1v1h-1zM232,825h1v1h-1zM227,822h1v1h-1zM214,792h1v1h-1zM213,802h1v1h-1zM216,801h1v1h-1zM217,798h1v1h-1zM217,801h1v1h-1zM223,815h1v1h-1zM215,799h1v1h-1zM227,821h1v1h-1zM214,795h1v1h-1zM229,820h1v1h-1zM221,803h1v1h-1zM225,811h1v1h-1zM222,809h1v1h-1zM217,799h1v1h-1zM214,801h1v1h-1zM211,794h1v1h-1zM224,813h1v1h-1zM229,821h1v1h-1zM224,820h1v1h-1zM217,793h1v1h-1zM220,811h1v1h-1zM227,813h1v1h-1zM217,802h1v1h-1zM218,802h1v1h-1zM214,796h1v1h-1zM212,793h1v1h-1zM222,811h1v1h-1zM229,823h1v1h-1zM213,798h1v1h-1zM219,805h1v1h-1zM213,797h1v1h-1zM218,796h1v1h-1zM217,809h1v1h-1zM219,814h1v1h-1zM226,821h1v1h-1zM215,807h1v1h-1zM230,820h1v1h-1zM230,823h1v1h-1zM220,807h1v1h-1zM223,811h1v1h-1zM231,823h1v1h-1zM226,812h1v1h-1zM231,825h1v1h-1zM216,802h1v1h-1zM230,828h1v1h-1zM226,817h1v1h-1zM229,826h1v1h-1zM221,810h1v1h-1zM216,799h1v1h-1zM220,809h1v1h-1zM212,796h1v1h-1zM222,814h1v1h-1zM221,811h1v1h-1zM219,806h1v1h-1zM221,813h1v1h-1zM228,824h1v1h-1zM218,808h1v1h-1zM227,820h1v1h-1zM218,804h1v1h-1zM226,816h1v1h-1zM222,808h1v1h-1zM232,827h1v1h-1zM213,792h1v1h-1zM224,810h1v1h-1zM221,805h1v1h-1zM223,816h1v1h-1zM221,808h1v1h-1zM219,807h1v1h-1zM220,802h1v1h-1zM220,806h1v1h-1zM227,816h1v1h-1zM221,802h1v1h-1zM231,828h1v1h-1zM230,825h1v1h-1zM220,813h1v1h-1zM221,819h1v1h-1zM219,809h1v1h-1zM222,805h1v1h-1zM218,807h1v1h-1zM231,824h1v1h-1zM217,805h1v1h-1zM216,805h1v1h-1zM214,804h1v1h-1zM228,822h1v1h-1zM215,801h1v1h-1zM222,812h1v1h-1zM231,827h1v1h-1zM221,807h1v1h-1zM227,818h1v1h-1zM229,827h1v1h-1zM217,800h1v1h-1zM216,798h1v1h-1zM223,810h1v1h-1zM226,822h1v1h-1zM217,796h1v1h-1zM218,806h1v1h-1zM216,795h1v1h-1zM228,827h1v1h-1zM227,826h1v1h-1zM227,824h1v1h-1zM226,827h1v1h-1zM215,804h1v1h-1zM230,829h1v1h-1zM214,798h1v1h-1zM227,823h1v1h-1zM213,794h1v1h-1zM222,807h1v1h-1zM219,802h1v1h-1zM225,822h1v1h-1zM216,800h1v1h-1zM222,815h1v1h-1zM220,805h1v1h-1zM215,806h1v1h-1zM229,818h1v1h-1zM224,816h1v1h-1zM218,801h1v1h-1zM225,816h1v1h-1zM215,796h1v1h-1zM226,820h1v1h-1zM225,817h1v1h-1zM228,821h1v1h-1zM215,794h1v1h-1zM220,804h1v1h-1zM221,806h1v1h-1zM223,807h1v1h-1zM227,817h1v1h-1zM217,808h1v1h-1zM215,798h1v1h-1zM225,812h1v1h-1zM223,813h1v1h-1zM219,813h1v1h-1zM218,809h1v1h-1zM225,821h1v1h-1zM216,803h1v1h-1zM219,803h1v1h-1zM215,803h1v1h-1zM218,800h1v1h-1zM220,808h1v1h-1zM218,799h1v1h-1zM224,806h1v1h-1zM216,797h1v1h-1zM225,810h1v1h-1zM224,807h1v1h-1zM216,806h1v1h-1zM213,799h1v1h-1zM222,806h1v1h-1zM216,804h1v1h-1zM215,800h1v1h-1zM226,809h1v1h-1zM224,808h1v1h-1zM224,804h1v1h-1zM228,809h1v1h-1zM227,811h1v1h-1zM226,811h1v1h-1zM220,810h1v1h-1zM216,807h1v1h-1zM217,803h1v1h-1zM224,809h1v1h-1zM221,809h1v1h-1zM237,800h1v1h-1zM241,803h1v1h-1zM235,803h1v1h-1zM240,802h1v1h-1zM240,801h1v1h-1zM231,806h1v1h-1zM237,803h1v1h-1zM240,800h1v1h-1zM230,807h1v1h-1zM232,805h1v1h-1zM236,805h1v1h-1zM237,807h1v1h-1zM235,801h1v1h-1zM242,800h1v1h-1zM230,806h1v1h-1zM239,800h1v1h-1zM237,806h1v1h-1zM236,803h1v1h-1zM231,807h1v1h-1zM232,807h1v1h-1zM236,804h1v1h-1zM227,808h1v1h-1zM233,808h1v1h-1zM233,807h1v1h-1zM232,804h1v1h-1zM241,800h1v1h-1zM234,807h1v1h-1zM234,803h1v1h-1zM235,802h1v1h-1zM235,804h1v1h-1zM233,806h1v1h-1zM232,806h1v1h-1zM234,806h1v1h-1zM239,803h1v1h-1zM238,803h1v1h-1zM229,807h1v1h-1zM234,805h1v1h-1zM232,808h1v1h-1zM238,801h1v1h-1zM233,802h1v1h-1zM239,804h1v1h-1zM248,793h1v1h-1zM238,799h1v1h-1zM247,794h1v1h-1zM243,796h1v1h-1zM245,797h1v1h-1zM246,797h1v1h-1zM242,801h1v1h-1zM252,792h1v1h-1zM247,795h1v1h-1zM243,803h1v1h-1zM242,799h1v1h-1zM243,795h1v1h-1zM245,794h1v1h-1zM247,797h1v1h-1zM248,792h1v1h-1zM250,793h1v1h-1zM239,798h1v1h-1zM243,801h1v1h-1zM247,793h1v1h-1zM250,794h1v1h-1zM243,799h1v1h-1zM249,792h1v1h-1zM248,799h1v1h-1zM244,795h1v1h-1zM246,794h1v1h-1zM251,794h1v1h-1zM251,793h1v1h-1zM248,795h1v1h-1zM246,796h1v1h-1zM242,797h1v1h-1zM244,799h1v1h-1zM245,793h1v1h-1zM250,796h1v1h-1zM250,791h1v1h-1zM241,801h1v1h-1zM242,803h1v1h-1zM251,791h1v1h-1zM241,805h1v1h-1zM249,795h1v1h-1zM242,802h1v1h-1zM249,797h1v1h-1zM246,798h1v1h-1zM246,799h1v1h-1zM243,798h1v1h-1zM244,794h1v1h-1zM246,795h1v1h-1zM252,791h1v1h-1zM249,794h1v1h-1zM252,793h1v1h-1zM246,793h1v1h-1zM245,796h1v1h-1zM245,795h1v1h-1zM245,798h1v1h-1zM247,791h1v1h-1zM244,796h1v1h-1zM249,789h1v1h-1zM241,799h1v1h-1zM243,802h1v1h-1zM239,801h1v1h-1zM250,800h1v1h-1zM252,804h1v1h-1zM249,802h1v1h-1zM249,803h1v1h-1zM250,798h1v1h-1zM249,798h1v1h-1zM250,802h1v1h-1zM247,796h1v1h-1zM251,801h1v1h-1zM248,802h1v1h-1zM253,803h1v1h-1zM250,803h1v1h-1zM249,799h1v1h-1zM252,801h1v1h-1zM248,801h1v1h-1zM247,799h1v1h-1zM251,805h1v1h-1zM247,801h1v1h-1zM247,800h1v1h-1zM246,801h1v1h-1zM248,798h1v1h-1zM253,805h1v1h-1zM233,815h1v1h-1zM234,823h1v1h-1zM233,823h1v1h-1zM234,822h1v1h-1zM235,822h1v1h-1zM233,817h1v1h-1zM232,816h1v1h-1zM233,826h1v1h-1zM233,812h1v1h-1zM234,818h1v1h-1zM233,822h1v1h-1zM231,814h1v1h-1zM233,818h1v1h-1zM235,825h1v1h-1zM235,826h1v1h-1zM232,817h1v1h-1z"/>
<path fill="#1030c8" d="M187,778h1v1h-1zM187,777h1v1h-1zM187,776h1v1h-1zM188,778h1v1h-1zM188,780h1v1h-1zM186,777h1v1h-1zM185,776h1v1h-1zM186,776h1v1h-1zM192,790h1v1h-1z"/>
<path fill="#2a80dc" d="M223,802h1v1h-1zM223,803h1v1h-1zM221,791h1v1h-1zM224,794h1v1h-1zM223,801h1v1h-1zM224,801h1v1h-1zM222,790h1v1h-1zM225,804h1v1h-1zM220,793h1v1h-1z"/>
<path fill="#101060" d="M226,810h2v1h-2zM225,812h1v3h-1z"/>
<rect x="225" y="602" width="1" height="255" fill="#000"/>
<rect x="82" y="802" width="514" height="1" fill="#000"/>
<rect x="0" y="914" width="607" height="166" fill="#45608f"/>
<rect x="1" y="915" width="605" height="164" fill="#fff"/>
<rect x="81" y="924" width="516" height="103" fill="#000"/>
<rect x="82" y="925" width="514" height="101" fill="#fff"/>
<rect x="82" y="926" width="514" height="1" fill="#000"/>
<g clip-path="url(#clipT3)">
<rect x="73" y="926" width="8" height="1" fill="#000"/>
<text transform="translate(66.80,931.00) scale(0.97,1)" text-anchor="end" fill="#22a022" font-size="13">0.00</text>
<rect x="78" y="933" width="3" height="1" fill="#000"/>
<rect x="78" y="939" width="3" height="1" fill="#000"/>
<rect x="78" y="946" width="3" height="1" fill="#000"/>
<rect x="78" y="952" width="3" height="1" fill="#000"/>
<rect x="73" y="959" width="8" height="1" fill="#000"/>
<text transform="translate(66.80,964.00) scale(0.97,1)" text-anchor="end" fill="#22a022" font-size="13">-5.00</text>
<rect x="78" y="966" width="3" height="1" fill="#000"/>
<rect x="78" y="972" width="3" height="1" fill="#000"/>
<rect x="78" y="979" width="3" height="1" fill="#000"/>
<rect x="78" y="986" width="3" height="1" fill="#000"/>
<rect x="73" y="992" width="8" height="1" fill="#000"/>
<text transform="translate(66.80,997.00) scale(0.97,1)" text-anchor="end" fill="#22a022" font-size="13">-10.00</text>
<rect x="78" y="999" width="3" height="1" fill="#000"/>
<rect x="78" y="1005" width="3" height="1" fill="#000"/>
<rect x="78" y="1012" width="3" height="1" fill="#000"/>
<rect x="78" y="1019" width="3" height="1" fill="#000"/>
<rect x="73" y="1025" width="8" height="1" fill="#000"/>
<text transform="translate(66.80,1030.00) scale(0.97,1)" text-anchor="end" fill="#22a022" font-size="13">-15.00</text>
</g>
<rect x="84" y="1027" width="1" height="9" fill="#000"/>
<rect x="94" y="1027" width="1" height="4" fill="#000"/>
<rect x="104" y="1027" width="1" height="4" fill="#000"/>
<rect x="114" y="1027" width="1" height="4" fill="#000"/>
<rect x="124" y="1027" width="1" height="4" fill="#000"/>
<rect x="135" y="1027" width="1" height="9" fill="#000"/>
<rect x="145" y="1027" width="1" height="4" fill="#000"/>
<rect x="155" y="1027" width="1" height="4" fill="#000"/>
<rect x="165" y="1027" width="1" height="4" fill="#000"/>
<rect x="175" y="1027" width="1" height="4" fill="#000"/>
<rect x="186" y="1027" width="1" height="9" fill="#000"/>
<rect x="196" y="1027" width="1" height="4" fill="#000"/>
<rect x="206" y="1027" width="1" height="4" fill="#000"/>
<rect x="216" y="1027" width="1" height="4" fill="#000"/>
<rect x="227" y="1027" width="1" height="4" fill="#000"/>
<rect x="237" y="1027" width="1" height="9" fill="#000"/>
<rect x="247" y="1027" width="1" height="4" fill="#000"/>
<rect x="257" y="1027" width="1" height="4" fill="#000"/>
<rect x="267" y="1027" width="1" height="4" fill="#000"/>
<rect x="278" y="1027" width="1" height="4" fill="#000"/>
<rect x="288" y="1027" width="1" height="9" fill="#000"/>
<rect x="298" y="1027" width="1" height="4" fill="#000"/>
<rect x="308" y="1027" width="1" height="4" fill="#000"/>
<rect x="319" y="1027" width="1" height="4" fill="#000"/>
<rect x="329" y="1027" width="1" height="4" fill="#000"/>
<rect x="339" y="1027" width="1" height="9" fill="#000"/>
<rect x="349" y="1027" width="1" height="4" fill="#000"/>
<rect x="359" y="1027" width="1" height="4" fill="#000"/>
<rect x="370" y="1027" width="1" height="4" fill="#000"/>
<rect x="380" y="1027" width="1" height="4" fill="#000"/>
<rect x="390" y="1027" width="1" height="9" fill="#000"/>
<rect x="400" y="1027" width="1" height="4" fill="#000"/>
<rect x="411" y="1027" width="1" height="4" fill="#000"/>
<rect x="421" y="1027" width="1" height="4" fill="#000"/>
<rect x="431" y="1027" width="1" height="4" fill="#000"/>
<rect x="441" y="1027" width="1" height="9" fill="#000"/>
<rect x="451" y="1027" width="1" height="4" fill="#000"/>
<rect x="462" y="1027" width="1" height="4" fill="#000"/>
<rect x="472" y="1027" width="1" height="4" fill="#000"/>
<rect x="482" y="1027" width="1" height="4" fill="#000"/>
<rect x="492" y="1027" width="1" height="9" fill="#000"/>
<rect x="503" y="1027" width="1" height="4" fill="#000"/>
<rect x="513" y="1027" width="1" height="4" fill="#000"/>
<rect x="523" y="1027" width="1" height="4" fill="#000"/>
<rect x="533" y="1027" width="1" height="4" fill="#000"/>
<rect x="543" y="1027" width="1" height="9" fill="#000"/>
<rect x="554" y="1027" width="1" height="4" fill="#000"/>
<rect x="564" y="1027" width="1" height="4" fill="#000"/>
<rect x="574" y="1027" width="1" height="4" fill="#000"/>
<rect x="584" y="1027" width="1" height="4" fill="#000"/>
<g clip-path="url(#clipS2)">
<text transform="translate(84.80,1049.00) scale(0.97,1)" text-anchor="middle" fill="#22a022" font-size="13">0.500</text>
<text transform="translate(135.90,1049.00) scale(0.97,1)" text-anchor="middle" fill="#22a022" font-size="13">0.550</text>
<text transform="translate(187.00,1049.00) scale(0.97,1)" text-anchor="middle" fill="#22a022" font-size="13">0.600</text>
<text transform="translate(238.10,1049.00) scale(0.97,1)" text-anchor="middle" fill="#22a022" font-size="13">0.650</text>
<text transform="translate(289.20,1049.00) scale(0.97,1)" text-anchor="middle" fill="#22a022" font-size="13">0.700</text>
<text transform="translate(340.30,1049.00) scale(0.97,1)" text-anchor="middle" fill="#22a022" font-size="13">0.750</text>
<text transform="translate(391.40,1049.00) scale(0.97,1)" text-anchor="middle" fill="#22a022" font-size="13">0.800</text>
<text transform="translate(442.50,1049.00) scale(0.97,1)" text-anchor="middle" fill="#22a022" font-size="13">0.850</text>
<text transform="translate(493.60,1049.00) scale(0.97,1)" text-anchor="middle" fill="#22a022" font-size="13">0.900</text>
<text transform="translate(544.70,1049.00) scale(0.97,1)" text-anchor="middle" fill="#22a022" font-size="13">0.950</text>
</g>
<text transform="translate(20.00,1054.00) scale(0.97,1)" text-anchor="start" fill="#22a022" font-size="13">0.638</text>
<text transform="translate(20.00,1068.00) scale(0.97,1)" text-anchor="start" fill="#22a022" font-size="13">3.14</text>
<text transform="translate(338.30,1068.00) scale(1.0,1)" text-anchor="middle" fill="#22a022" font-size="13">LabNTKon[0]</text>
<text transform="translate(23.10,975.00) rotate(-90) scale(0.892,1)" text-anchor="middle" fill="#22a022" font-size="13">LambdaLabError[0]</text>
<rect x="225" y="925" width="1" height="101" fill="#000"/>
<rect x="611" y="46" width="985" height="702" fill="#45608f"/>
<rect x="612" y="47" width="983" height="700" fill="#fff"/>
<rect x="682" y="56" width="905" height="683" fill="#000"/>
<rect x="684" y="58" width="901" height="679" fill="#fff"/>
<rect x="675" y="735" width="7" height="1" fill="#000"/>
<text transform="translate(669.50,740.00) scale(0.97,1)" text-anchor="end" fill="#1515a0" font-size="13">0.400</text>
<rect x="680" y="729" width="2" height="1" fill="#000"/>
<rect x="680" y="724" width="2" height="1" fill="#000"/>
<rect x="680" y="718" width="2" height="1" fill="#000"/>
<rect x="680" y="712" width="2" height="1" fill="#000"/>
<rect x="675" y="707" width="7" height="1" fill="#000"/>
<text transform="translate(669.50,712.00) scale(0.97,1)" text-anchor="end" fill="#1515a0" font-size="13">0.425</text>
<rect x="680" y="701" width="2" height="1" fill="#000"/>
<rect x="680" y="696" width="2" height="1" fill="#000"/>
<rect x="680" y="690" width="2" height="1" fill="#000"/>
<rect x="680" y="684" width="2" height="1" fill="#000"/>
<rect x="675" y="679" width="7" height="1" fill="#000"/>
<text transform="translate(669.50,684.00) scale(0.97,1)" text-anchor="end" fill="#1515a0" font-size="13">0.450</text>
<rect x="680" y="673" width="2" height="1" fill="#000"/>
<rect x="680" y="667" width="2" height="1" fill="#000"/>
<rect x="680" y="662" width="2" height="1" fill="#000"/>
<rect x="680" y="656" width="2" height="1" fill="#000"/>
<rect x="675" y="650" width="7" height="1" fill="#000"/>
<text transform="translate(669.50,655.00) scale(0.97,1)" text-anchor="end" fill="#1515a0" font-size="13">0.475</text>
<rect x="680" y="645" width="2" height="1" fill="#000"/>
<rect x="680" y="639" width="2" height="1" fill="#000"/>
<rect x="680" y="634" width="2" height="1" fill="#000"/>
<rect x="680" y="628" width="2" height="1" fill="#000"/>
<rect x="675" y="622" width="7" height="1" fill="#000"/>
<text transform="translate(669.50,627.00) scale(0.97,1)" text-anchor="end" fill="#1515a0" font-size="13">0.500</text>
<rect x="680" y="617" width="2" height="1" fill="#000"/>
<rect x="680" y="611" width="2" height="1" fill="#000"/>
<rect x="680" y="605" width="2" height="1" fill="#000"/>
<rect x="680" y="600" width="2" height="1" fill="#000"/>
<rect x="675" y="594" width="7" height="1" fill="#000"/>
<text transform="translate(669.50,599.00) scale(0.97,1)" text-anchor="end" fill="#1515a0" font-size="13">0.525</text>
<rect x="680" y="588" width="2" height="1" fill="#000"/>
<rect x="680" y="583" width="2" height="1" fill="#000"/>
<rect x="680" y="577" width="2" height="1" fill="#000"/>
<rect x="680" y="572" width="2" height="1" fill="#000"/>
<rect x="675" y="566" width="7" height="1" fill="#000"/>
<text transform="translate(669.50,571.00) scale(0.97,1)" text-anchor="end" fill="#1515a0" font-size="13">0.550</text>
<rect x="680" y="560" width="2" height="1" fill="#000"/>
<rect x="680" y="555" width="2" height="1" fill="#000"/>
<rect x="680" y="549" width="2" height="1" fill="#000"/>
<rect x="680" y="543" width="2" height="1" fill="#000"/>
<rect x="675" y="538" width="7" height="1" fill="#000"/>
<text transform="translate(669.50,543.00) scale(0.97,1)" text-anchor="end" fill="#1515a0" font-size="13">0.575</text>
<rect x="680" y="532" width="2" height="1" fill="#000"/>
<rect x="680" y="527" width="2" height="1" fill="#000"/>
<rect x="680" y="521" width="2" height="1" fill="#000"/>
<rect x="680" y="515" width="2" height="1" fill="#000"/>
<rect x="675" y="510" width="7" height="1" fill="#000"/>
<text transform="translate(669.50,515.00) scale(0.97,1)" text-anchor="end" fill="#1515a0" font-size="13">0.600</text>
<rect x="680" y="504" width="2" height="1" fill="#000"/>
<rect x="680" y="498" width="2" height="1" fill="#000"/>
<rect x="680" y="493" width="2" height="1" fill="#000"/>
<rect x="680" y="487" width="2" height="1" fill="#000"/>
<rect x="675" y="481" width="7" height="1" fill="#000"/>
<text transform="translate(669.50,486.00) scale(0.97,1)" text-anchor="end" fill="#1515a0" font-size="13">0.625</text>
<rect x="680" y="476" width="2" height="1" fill="#000"/>
<rect x="680" y="470" width="2" height="1" fill="#000"/>
<rect x="680" y="465" width="2" height="1" fill="#000"/>
<rect x="680" y="459" width="2" height="1" fill="#000"/>
<rect x="675" y="453" width="7" height="1" fill="#000"/>
<text transform="translate(669.50,458.00) scale(0.97,1)" text-anchor="end" fill="#1515a0" font-size="13">0.650</text>
<rect x="680" y="448" width="2" height="1" fill="#000"/>
<rect x="680" y="442" width="2" height="1" fill="#000"/>
<rect x="680" y="436" width="2" height="1" fill="#000"/>
<rect x="680" y="431" width="2" height="1" fill="#000"/>
<rect x="675" y="425" width="7" height="1" fill="#000"/>
<text transform="translate(669.50,430.00) scale(0.97,1)" text-anchor="end" fill="#1515a0" font-size="13">0.675</text>
<rect x="680" y="419" width="2" height="1" fill="#000"/>
<rect x="680" y="414" width="2" height="1" fill="#000"/>
<rect x="680" y="408" width="2" height="1" fill="#000"/>
<rect x="680" y="403" width="2" height="1" fill="#000"/>
<rect x="675" y="397" width="7" height="1" fill="#000"/>
<text transform="translate(669.50,402.00) scale(0.97,1)" text-anchor="end" fill="#1515a0" font-size="13">0.700</text>
<rect x="680" y="391" width="2" height="1" fill="#000"/>
<rect x="680" y="386" width="2" height="1" fill="#000"/>
<rect x="680" y="380" width="2" height="1" fill="#000"/>
<rect x="680" y="374" width="2" height="1" fill="#000"/>
<rect x="675" y="369" width="7" height="1" fill="#000"/>
<text transform="translate(669.50,374.00) scale(0.97,1)" text-anchor="end" fill="#1515a0" font-size="13">0.725</text>
<rect x="680" y="363" width="2" height="1" fill="#000"/>
<rect x="680" y="357" width="2" height="1" fill="#000"/>
<rect x="680" y="352" width="2" height="1" fill="#000"/>
<rect x="680" y="346" width="2" height="1" fill="#000"/>
<rect x="675" y="341" width="7" height="1" fill="#000"/>
<text transform="translate(669.50,346.00) scale(0.97,1)" text-anchor="end" fill="#1515a0" font-size="13">0.750</text>
<rect x="680" y="335" width="2" height="1" fill="#000"/>
<rect x="680" y="329" width="2" height="1" fill="#000"/>
<rect x="680" y="324" width="2" height="1" fill="#000"/>
<rect x="680" y="318" width="2" height="1" fill="#000"/>
<rect x="675" y="312" width="7" height="1" fill="#000"/>
<text transform="translate(669.50,317.00) scale(0.97,1)" text-anchor="end" fill="#1515a0" font-size="13">0.775</text>
<rect x="680" y="307" width="2" height="1" fill="#000"/>
<rect x="680" y="301" width="2" height="1" fill="#000"/>
<rect x="680" y="295" width="2" height="1" fill="#000"/>
<rect x="680" y="290" width="2" height="1" fill="#000"/>
<rect x="675" y="284" width="7" height="1" fill="#000"/>
<text transform="translate(669.50,289.00) scale(0.97,1)" text-anchor="end" fill="#1515a0" font-size="13">0.800</text>
<rect x="680" y="279" width="2" height="1" fill="#000"/>
<rect x="680" y="273" width="2" height="1" fill="#000"/>
<rect x="680" y="267" width="2" height="1" fill="#000"/>
<rect x="680" y="262" width="2" height="1" fill="#000"/>
<rect x="675" y="256" width="7" height="1" fill="#000"/>
<text transform="translate(669.50,261.00) scale(0.97,1)" text-anchor="end" fill="#1515a0" font-size="13">0.825</text>
<rect x="680" y="250" width="2" height="1" fill="#000"/>
<rect x="680" y="245" width="2" height="1" fill="#000"/>
<rect x="680" y="239" width="2" height="1" fill="#000"/>
<rect x="680" y="234" width="2" height="1" fill="#000"/>
<rect x="675" y="228" width="7" height="1" fill="#000"/>
<text transform="translate(669.50,233.00) scale(0.97,1)" text-anchor="end" fill="#1515a0" font-size="13">0.850</text>
<rect x="680" y="222" width="2" height="1" fill="#000"/>
<rect x="680" y="217" width="2" height="1" fill="#000"/>
<rect x="680" y="211" width="2" height="1" fill="#000"/>
<rect x="680" y="205" width="2" height="1" fill="#000"/>
<rect x="675" y="200" width="7" height="1" fill="#000"/>
<text transform="translate(669.50,205.00) scale(0.97,1)" text-anchor="end" fill="#1515a0" font-size="13">0.875</text>
<rect x="680" y="194" width="2" height="1" fill="#000"/>
<rect x="680" y="188" width="2" height="1" fill="#000"/>
<rect x="680" y="183" width="2" height="1" fill="#000"/>
<rect x="680" y="177" width="2" height="1" fill="#000"/>
<rect x="675" y="172" width="7" height="1" fill="#000"/>
<text transform="translate(669.50,177.00) scale(0.97,1)" text-anchor="end" fill="#1515a0" font-size="13">0.900</text>
<rect x="680" y="166" width="2" height="1" fill="#000"/>
<rect x="680" y="160" width="2" height="1" fill="#000"/>
<rect x="680" y="155" width="2" height="1" fill="#000"/>
<rect x="680" y="149" width="2" height="1" fill="#000"/>
<rect x="675" y="143" width="7" height="1" fill="#000"/>
<text transform="translate(669.50,148.00) scale(0.97,1)" text-anchor="end" fill="#1515a0" font-size="13">0.925</text>
<rect x="680" y="138" width="2" height="1" fill="#000"/>
<rect x="680" y="132" width="2" height="1" fill="#000"/>
<rect x="680" y="126" width="2" height="1" fill="#000"/>
<rect x="680" y="121" width="2" height="1" fill="#000"/>
<rect x="675" y="115" width="7" height="1" fill="#000"/>
<text transform="translate(669.50,120.00) scale(0.97,1)" text-anchor="end" fill="#1515a0" font-size="13">0.950</text>
<rect x="680" y="110" width="2" height="1" fill="#000"/>
<rect x="680" y="104" width="2" height="1" fill="#000"/>
<rect x="680" y="98" width="2" height="1" fill="#000"/>
<rect x="680" y="93" width="2" height="1" fill="#000"/>
<rect x="675" y="87" width="7" height="1" fill="#000"/>
<text transform="translate(669.50,92.00) scale(0.97,1)" text-anchor="end" fill="#1515a0" font-size="13">0.975</text>
<rect x="680" y="81" width="2" height="1" fill="#000"/>
<rect x="680" y="76" width="2" height="1" fill="#000"/>
<rect x="680" y="70" width="2" height="1" fill="#000"/>
<rect x="680" y="64" width="2" height="1" fill="#000"/>
<text transform="translate(623.90,397.00) rotate(-90) scale(0.915,1)" text-anchor="middle" fill="#1515a0" font-size="13">LabNTKa_U12[2] (λ)</text>
<g clip-path="url(#clipM)">
<polygon fill="#eeeefc" points="684,737 684,444 1541,444 1542,442.5 1545,435 1548,433 1552.5,431 1556,425.5 1560,424.5 1564,423.5 1568,421.5 1572.5,420.5 1577,419.5 1581,419 1583.5,415.5 1585,415 1585,737"/>
<rect x="684" y="443" width="901" height="1" fill="#000"/>
<path fill="#1010b4" d="M682,513h3v1h-3zM685,512h5v2h-5zM690,513h2v1h-2zM692,512h1v2h-1zM693,510h1v4h-1zM694,508h1v4h-1zM695,508h1v2h-1zM696,509h1v1h-1zM697,508h7v2h-7zM704,509h3v1h-3zM707,508h2v2h-2zM709,509h1v1h-1zM710,508h1v2h-1zM711,507h1v3h-1zM712,505h1v4h-1zM713,504h1v3h-1zM714,504h10v2h-10zM724,505h4v1h-4zM728,504h4v2h-4zM732,505h2v1h-2zM734,504h5v2h-5zM739,505h1v1h-1zM740,504h3v2h-3zM743,505h2v1h-2zM745,504h2v2h-2zM747,503h1v3h-1zM748,501h1v4h-1zM749,501h2v2h-2zM751,502h1v1h-1zM752,501h4v2h-4zM756,502h3v1h-3zM759,501h6v2h-6zM765,502h1v1h-1zM766,501h8v2h-8zM774,502h2v1h-2zM776,501h4v2h-4zM780,502h1v1h-1zM781,501h1v2h-1zM782,502h8v1h-8zM790,501h14v2h-14zM804,502h1v1h-1zM805,501h6v2h-6zM811,502h2v1h-2zM813,501h2v2h-2zM815,502h1v1h-1zM816,501h4v2h-4zM820,502h1v1h-1zM821,501h4v2h-4zM825,502h3v1h-3zM828,501h7v2h-7zM835,502h3v1h-3zM838,501h5v2h-5zM843,502h1v1h-1zM844,501h4v2h-4zM848,502h2v1h-2zM850,501h2v2h-2zM852,502h6v1h-6zM858,501h1v2h-1zM859,502h4v1h-4zM863,501h8v2h-8zM871,502h4v1h-4zM875,501h5v2h-5zM880,502h1v1h-1zM881,501h10v2h-10zM891,502h2v1h-2zM893,501h6v2h-6zM899,502h2v1h-2zM901,501h9v2h-9zM910,502h3v1h-3zM913,501h4v2h-4zM917,502h1v1h-1zM918,501h5v2h-5zM923,502h1v1h-1zM924,501h2v2h-2zM926,502h1v1h-1zM927,501h5v2h-5zM932,502h2v1h-2zM934,502h1v2h-1zM935,503h1v1h-1zM936,502h1v3h-1zM937,503h1v2h-1zM938,503h1v3h-1zM939,504h7v2h-7zM946,505h1v1h-1zM947,504h14v2h-14zM961,505h1v1h-1zM962,504h2v2h-2zM964,505h4v1h-4zM968,504h7v2h-7zM975,505h6v1h-6zM981,504h7v2h-7zM988,505h4v1h-4zM992,504h2v2h-2zM994,505h3v1h-3zM997,504h3v2h-3zM1000,505h2v1h-2zM1002,504h6v2h-6zM1008,505h4v1h-4zM1012,504h12v2h-12zM1024,505h2v1h-2zM1026,504h3v2h-3zM1029,505h2v1h-2zM1031,504h5v2h-5zM1036,505h1v1h-1zM1037,504h4v2h-4zM1041,505h1v1h-1zM1042,504h6v2h-6zM1048,505h1v1h-1zM1049,504h12v2h-12zM1061,505h4v1h-4zM1065,504h6v2h-6zM1071,505h1v1h-1zM1072,504h7v2h-7zM1079,505h1v1h-1zM1080,504h3v2h-3zM1083,505h1v1h-1zM1084,504h4v2h-4zM1088,505h1v1h-1zM1089,504h1v2h-1zM1090,504h1v3h-1zM1091,505h1v3h-1zM1092,507h1v1h-1zM1093,506h1v3h-1zM1094,507h1v3h-1zM1095,508h8v2h-8zM1103,509h1v1h-1zM1104,508h3v2h-3zM1107,509h8v1h-8zM1115,508h2v2h-2zM1117,509h1v1h-1zM1118,508h13v2h-13zM1131,509h9v1h-9zM1140,508h2v2h-2zM1142,509h1v1h-1zM1143,508h2v2h-2zM1145,509h1v1h-1zM1146,508h9v2h-9zM1155,509h1v1h-1zM1156,508h7v2h-7zM1163,509h5v1h-5zM1168,508h3v2h-3zM1171,509h1v1h-1zM1172,508h9v2h-9zM1181,509h6v1h-6zM1187,508h5v2h-5zM1192,509h1v1h-1zM1193,508h1v2h-1zM1194,509h1v1h-1zM1195,508h1v2h-1zM1196,509h1v1h-1zM1197,508h2v2h-2zM1199,509h2v1h-2zM1201,508h5v2h-5zM1206,509h3v1h-3zM1209,508h6v2h-6zM1215,509h2v1h-2zM1217,508h5v2h-5zM1222,509h1v1h-1zM1223,508h2v2h-2zM1225,509h1v1h-1zM1226,508h5v2h-5zM1231,509h1v1h-1zM1232,508h1v3h-1zM1233,509h1v3h-1zM1234,510h1v3h-1zM1235,511h2v2h-2z"/>
<path fill="#1010b4" d="M1236,512h5v1h-5zM1241,511h2v2h-2zM1243,512h7v1h-7zM1250,511h1v2h-1zM1251,512h3v1h-3zM1254,511h1v2h-1zM1255,512h12v1h-12zM1267,511h1v2h-1zM1268,512h18v1h-18zM1286,511h2v2h-2zM1288,512h21v1h-21zM1309,511h1v2h-1zM1310,512h5v1h-5zM1315,511h3v2h-3zM1318,512h13v1h-13zM1331,511h4v2h-4zM1335,512h3v1h-3zM1338,511h2v2h-2zM1340,512h16v1h-16zM1356,511h1v2h-1zM1357,512h13v1h-13zM1370,512h1v2h-1zM1371,513h1v2h-1zM1372,514h1v2h-1zM1373,514h1v3h-1zM1374,515h4v2h-4zM1378,516h4v1h-4zM1382,515h1v2h-1zM1383,516h4v1h-4zM1387,515h2v2h-2zM1389,516h1v1h-1zM1390,515h2v2h-2zM1392,516h3v1h-3zM1395,515h2v2h-2zM1397,516h3v1h-3zM1400,515h1v2h-1zM1401,516h4v1h-4zM1405,515h2v2h-2zM1407,516h3v1h-3zM1410,515h2v2h-2zM1412,516h13v1h-13zM1425,515h2v2h-2zM1427,516h13v1h-13zM1440,515h2v2h-2zM1442,516h9v1h-9zM1451,515h1v2h-1zM1452,516h17v1h-17zM1469,515h2v2h-2zM1471,516h17v1h-17zM1488,515h1v2h-1zM1489,516h6v1h-6zM1495,515h1v2h-1zM1496,516h17v1h-17zM1513,515h1v2h-1zM1514,513h1v3h-1zM1515,512h1v2h-1zM1516,510h1v3h-1zM1517,509h1v2h-1zM1518,509h1v1h-1zM1519,508h1v2h-1zM1520,507h2v2h-2zM1522,508h6v1h-6zM1528,508h1v3h-1zM1529,510h1v4h-1zM1530,513h1v6h-1zM1531,518h1v7h-1zM1532,524h1v2h-1zM1533,520h1v6h-1zM1534,511h1v10h-1zM1535,508h1v4h-1zM1536,507h1v4h-1zM1537,509h1v9h-1zM1538,517h1v8h-1zM1539,514h1v11h-1zM1540,507h1v8h-1zM1541,503h1v5h-1zM1542,502h1v2h-1zM1543,501h1v2h-1zM1544,500h1v2h-1zM1545,499h1v2h-1zM1546,498h1v2h-1zM1547,497h1v2h-1zM1548,497h3v1h-3zM1551,496h3v2h-3zM1554,495h1v3h-1zM1555,495h1v2h-1zM1556,494h1v2h-1zM1557,493h1v2h-1zM1558,493h1v1h-1zM1559,492h1v2h-1zM1560,492h1v1h-1zM1561,491h1v2h-1zM1562,490h1v2h-1zM1563,490h4v1h-4zM1567,489h3v2h-3zM1570,487h1v3h-1zM1571,487h1v2h-1zM1572,486h1v2h-1zM1573,486h4v1h-4zM1577,485h1v2h-1zM1578,484h1v2h-1zM1579,483h1v2h-1zM1580,483h6v1h-6z"/>
<path fill="#1fa01f" d="M682,505h2v1h-2zM684,504h2v2h-2zM686,505h28v1h-28zM714,504h2v2h-2zM716,505h28v1h-28zM744,504h1v2h-1zM745,505h7v1h-7zM752,505h1v2h-1zM753,506h1v1h-1zM754,506h2v2h-2zM756,507h1v1h-1zM757,507h1v2h-1zM758,508h17v1h-17zM775,507h2v2h-2zM777,508h12v1h-12zM789,507h2v2h-2zM791,508h27v1h-27zM818,507h1v2h-1zM819,508h6v1h-6zM825,507h2v2h-2zM827,508h3v1h-3zM830,506h1v3h-1zM831,505h1v2h-1zM832,505h3v1h-3zM835,504h1v2h-1zM836,505h4v1h-4zM840,503h1v3h-1zM841,502h1v2h-1zM842,502h8v1h-8zM850,502h1v6h-1zM851,507h1v8h-1zM852,514h2v5h-2zM854,508h1v7h-1zM855,502h1v7h-1zM856,497h1v6h-1zM857,497h1v7h-1zM858,503h1v6h-1zM859,508h1v7h-1zM860,507h1v8h-1zM861,500h1v8h-1zM862,495h1v6h-1zM863,495h1v1h-1zM864,495h1v2h-1zM865,496h3v1h-3zM868,495h1v2h-1zM869,494h1v2h-1zM870,494h1v1h-1zM871,493h1v2h-1zM872,492h1v2h-1zM873,492h1v1h-1zM874,491h1v2h-1zM875,490h1v2h-1zM876,490h1v1h-1zM877,489h1v2h-1zM878,488h1v2h-1zM879,487h1v2h-1zM880,486h1v2h-1zM881,486h1v1h-1zM882,485h1v2h-1zM883,485h1v1h-1zM884,484h1v2h-1zM885,484h2v1h-2zM887,483h1v2h-1zM888,483h17v1h-17zM905,482h1v2h-1zM906,479h1v4h-1zM907,478h1v3h-1zM908,479h10v1h-10zM918,478h1v2h-1zM919,479h5v1h-5zM924,478h1v2h-1zM925,476h1v3h-1zM926,475h1v2h-1zM927,475h24v1h-24zM951,473h1v3h-1zM952,471h1v3h-1zM953,471h38v1h-38zM991,470h1v2h-1zM992,468h1v3h-1zM993,467h1v2h-1zM994,467h89v1h-89zM1083,466h1v2h-1zM1084,467h35v1h-35zM1119,466h2v2h-2zM1121,467h39v1h-39zM1160,466h1v2h-1zM1161,467h10v1h-10zM1171,466h1v2h-1zM1172,467h9v1h-9zM1181,466h1v2h-1zM1182,467h26v1h-26zM1208,466h2v2h-2zM1210,467h2v1h-2zM1212,466h1v2h-1zM1213,467h1v1h-1zM1214,466h2v2h-2zM1216,467h5v1h-5zM1221,466h2v2h-2zM1223,467h6v1h-6zM1229,466h1v2h-1zM1230,467h39v1h-39zM1269,466h1v2h-1zM1270,467h38v1h-38zM1308,466h1v2h-1zM1309,467h73v1h-73zM1382,466h1v2h-1zM1383,467h25v1h-25zM1408,466h2v2h-2zM1410,467h22v1h-22zM1432,466h1v2h-1zM1433,467h1v1h-1zM1434,467h1v2h-1zM1435,468h1v1h-1zM1436,468h1v2h-1zM1437,469h1v1h-1zM1438,468h1v3h-1zM1439,470h1v1h-1zM1440,470h1v2h-1zM1441,471h27v1h-27zM1468,470h1v2h-1zM1469,471h16v1h-16zM1485,470h1v2h-1zM1486,471h2v1h-2zM1488,468h1v4h-1zM1489,467h1v2h-1zM1490,467h8v1h-8zM1498,466h1v2h-1zM1499,464h1v3h-1zM1500,463h1v2h-1zM1501,463h6v1h-6zM1507,463h1v4h-1zM1508,466h1v5h-1zM1509,470h1v5h-1zM1510,474h1v5h-1zM1511,477h1v2h-1zM1512,470h1v8h-1zM1513,465h1v6h-1zM1514,463h2v3h-2zM1516,465h1v9h-1zM1517,473h1v2h-1zM1518,468h1v7h-1zM1519,461h1v8h-1zM1520,458h1v4h-1zM1521,458h1v1h-1zM1522,458h1v2h-1zM1523,459h2v1h-2zM1525,458h1v2h-1zM1526,458h1v1h-1zM1527,457h1v2h-1zM1528,456h1v2h-1zM1529,456h1v1h-1zM1530,455h1v2h-1zM1531,455h1v1h-1zM1532,454h1v2h-1zM1533,453h1v2h-1zM1534,453h1v1h-1zM1535,452h1v2h-1zM1536,451h1v2h-1zM1537,451h1v1h-1zM1538,450h1v2h-1zM1539,449h1v2h-1zM1540,449h7v1h-7zM1547,448h1v2h-1zM1548,447h1v2h-1zM1549,446h1v2h-1zM1550,445h1v2h-1zM1551,445h2v1h-2zM1553,444h1v2h-1zM1554,444h4v1h-4zM1558,443h1v2h-1zM1559,442h1v2h-1zM1560,441h1v3h-1zM1561,441h1v2h-1zM1562,441h15v1h-15zM1577,439h1v3h-1zM1578,438h1v2h-1zM1579,436h1v3h-1zM1580,437h6v1h-6z"/>
<path fill="#8a1010" d="M682,456h51v1h-51zM733,455h2v2h-2zM735,456h3v1h-3zM738,455h2v2h-2zM740,456h63v1h-63zM803,455h1v2h-1zM804,456h11v1h-11zM815,455h2v2h-2zM817,456h25v1h-25zM842,455h2v2h-2zM844,456h85v1h-85zM929,455h1v2h-1zM930,456h16v1h-16zM946,455h2v2h-2zM948,456h16v1h-16zM964,455h1v2h-1zM965,456h266v1h-266zM1231,455h2v2h-2zM1233,456h27v1h-27zM1260,455h1v2h-1zM1261,456h4v1h-4zM1265,456h1v2h-1zM1266,457h2v1h-2zM1268,457h1v2h-1zM1269,458h1v1h-1zM1270,458h1v2h-1zM1271,459h2v1h-2zM1273,459h1v2h-1zM1274,460h51v1h-51zM1325,459h2v2h-2zM1327,460h43v1h-43zM1370,459h1v2h-1zM1371,460h7v1h-7zM1378,456h1v5h-1zM1379,456h11v1h-11zM1390,453h1v4h-1zM1391,451h1v3h-1zM1392,442h1v10h-1zM1393,440h1v3h-1zM1394,438h1v3h-1zM1395,438h1v1h-1zM1396,438h1v2h-1zM1397,439h1v2h-1zM1398,440h1v2h-1zM1399,438h1v4h-1zM1400,433h1v6h-1zM1401,428h1v6h-1zM1402,427h1v2h-1zM1403,427h1v3h-1zM1404,429h1v4h-1zM1405,432h1v3h-1zM1406,426h1v9h-1zM1407,419h1v8h-1zM1408,418h1v2h-1zM1409,418h1v5h-1zM1410,422h1v4h-1zM1411,425h1v5h-1zM1412,421h1v9h-1zM1413,413h1v9h-1zM1414,411h1v4h-1zM1415,410h1v3h-1zM1416,411h1v2h-1zM1417,412h1v1h-1zM1418,411h1v2h-1zM1419,410h1v2h-1zM1420,409h1v2h-1zM1421,408h1v2h-1zM1422,407h1v2h-1zM1423,406h1v2h-1zM1424,406h1v1h-1zM1425,405h1v2h-1zM1426,405h1v1h-1zM1427,404h1v2h-1zM1428,404h1v1h-1zM1429,403h1v2h-1zM1430,403h1v1h-1zM1431,402h1v2h-1zM1432,402h1v1h-1zM1433,401h1v2h-1zM1434,401h1v1h-1zM1435,400h1v2h-1zM1436,400h13v1h-13zM1449,399h1v2h-1zM1450,398h1v2h-1zM1451,397h1v2h-1zM1452,397h9v1h-9zM1461,396h1v2h-1zM1462,396h28v1h-28zM1490,394h1v3h-1zM1491,393h1v2h-1zM1492,393h24v1h-24zM1516,392h2v2h-2zM1518,393h30v1h-30zM1548,392h1v2h-1zM1549,391h1v2h-1zM1550,391h1v1h-1zM1551,390h1v2h-1zM1552,390h34v1h-34z"/>
<path fill="#c80000" d="M1393,440h1v5h-1zM1394,439h1v4h-1zM1395,437h1v4h-1zM1396,437h1v2h-1zM1397,437h1v4h-1zM1398,439h1v2h-1zM1399,438h1v3h-1zM1400,437h1v3h-1zM1401,429h1v10h-1zM1402,423h1v9h-1zM1403,423h1v5h-1zM1404,425h1v5h-1zM1405,428h1v4h-1zM1406,430h1v4h-1zM1407,425h1v9h-1zM1408,418h1v9h-1zM1409,416h1v4h-1zM1410,416h1v5h-1zM1411,419h1v6h-1zM1412,423h1v6h-1zM1413,420h1v9h-1zM1414,413h1v9h-1zM1415,408h1v7h-1zM1416,407h1v4h-1zM1417,406h1v4h-1zM1418,407h5v2h-5zM1423,406h1v3h-1zM1424,405h1v3h-1zM1425,404h1v3h-1zM1426,404h2v2h-2zM1428,403h1v3h-1zM1429,403h1v2h-1zM1430,402h1v3h-1zM1431,402h1v2h-1zM1432,401h2v3h-2zM1434,400h1v3h-1zM1435,400h1v2h-1zM1436,399h1v3h-1zM1437,398h1v3h-1zM1438,399h1v2h-1zM1439,398h1v3h-1zM1440,399h9v2h-9zM1449,398h1v3h-1zM1450,397h1v3h-1zM1451,396h1v3h-1zM1452,395h1v3h-1zM1453,396h2v2h-2zM1455,395h2v3h-2zM1457,396h2v2h-2zM1459,395h2v3h-2zM1461,394h1v3h-1zM1462,393h1v3h-1zM1463,393h2v2h-2zM1465,392h2v3h-2zM1467,393h1v2h-1zM1468,392h1v3h-1zM1469,393h2v2h-2zM1471,392h3v3h-3zM1474,391h1v3h-1zM1475,390h1v3h-1zM1476,389h1v3h-1zM1477,390h7v2h-7zM1484,389h1v3h-1zM1485,390h3v2h-3zM1488,389h1v3h-1zM1489,390h2v2h-2zM1491,389h1v3h-1zM1492,388h1v3h-1zM1493,388h7v2h-7zM1500,387h2v3h-2zM1502,388h2v2h-2zM1504,387h4v3h-4zM1508,388h2v2h-2zM1510,387h2v3h-2zM1512,388h3v2h-3zM1515,387h1v3h-1zM1516,386h1v3h-1zM1517,384h1v4h-1zM1518,385h8v2h-8zM1526,384h1v3h-1zM1527,385h1v2h-1zM1528,384h1v3h-1zM1529,385h2v2h-2zM1531,384h1v3h-1zM1532,385h1v2h-1zM1533,384h1v3h-1zM1534,385h2v2h-2zM1536,384h1v3h-1zM1537,385h12v2h-12zM1549,384h2v3h-2zM1551,385h3v2h-3zM1554,384h2v3h-2zM1556,385h4v2h-4zM1560,384h2v3h-2zM1562,385h3v2h-3zM1565,384h2v3h-2zM1567,385h5v2h-5zM1572,384h2v3h-2zM1574,385h2v2h-2zM1576,384h1v3h-1zM1577,385h9v2h-9z"/>
<path fill="#8a0000" d="M1393,440h1v1h-1zM1394,439h1v1h-1zM1395,437h3v1h-3zM1398,439h1v1h-1zM1399,438h1v1h-1zM1400,437h1v1h-1zM1401,429h1v1h-1zM1402,423h2v1h-2zM1404,425h1v1h-1zM1405,428h1v1h-1zM1406,430h1v1h-1zM1407,425h1v1h-1zM1408,418h1v1h-1zM1409,416h2v1h-2zM1411,419h1v1h-1zM1412,423h1v1h-1zM1413,420h1v1h-1zM1414,413h1v1h-1zM1415,408h1v1h-1zM1416,407h1v1h-1zM1417,406h1v1h-1zM1418,407h5v1h-5zM1423,406h1v1h-1zM1424,405h1v1h-1zM1425,404h3v1h-3zM1428,403h2v1h-2zM1430,402h2v1h-2zM1432,401h2v1h-2zM1434,400h2v1h-2zM1436,399h1v1h-1zM1437,398h1v1h-1zM1438,399h1v1h-1zM1439,398h1v1h-1zM1440,399h9v1h-9zM1449,398h1v1h-1zM1450,397h1v1h-1zM1451,396h1v1h-1zM1452,395h1v1h-1zM1453,396h2v1h-2zM1455,395h2v1h-2zM1457,396h2v1h-2zM1459,395h2v1h-2zM1461,394h1v1h-1zM1462,393h3v1h-3zM1465,392h2v1h-2zM1467,393h1v1h-1zM1468,392h1v1h-1zM1469,393h2v1h-2zM1471,392h3v1h-3zM1474,391h1v1h-1zM1475,390h1v1h-1zM1476,389h1v1h-1zM1477,390h7v1h-7zM1484,389h1v1h-1zM1485,390h3v1h-3zM1488,389h1v1h-1zM1489,390h2v1h-2zM1491,389h1v1h-1zM1492,388h8v1h-8zM1500,387h2v1h-2zM1502,388h2v1h-2zM1504,387h4v1h-4zM1508,388h2v1h-2zM1510,387h2v1h-2zM1512,388h3v1h-3zM1515,387h1v1h-1zM1516,386h1v1h-1zM1517,384h1v1h-1zM1518,385h8v1h-8zM1526,384h1v1h-1zM1527,385h1v1h-1zM1528,384h1v1h-1zM1529,385h2v1h-2zM1531,384h1v1h-1zM1532,385h1v1h-1zM1533,384h1v1h-1zM1534,385h2v1h-2zM1536,384h1v1h-1zM1537,385h12v1h-12zM1549,384h2v1h-2zM1551,385h3v1h-3zM1554,384h2v1h-2zM1556,385h4v1h-4zM1560,384h2v1h-2zM1562,385h3v1h-3zM1565,384h2v1h-2zM1567,385h5v1h-5zM1572,384h2v1h-2zM1574,385h2v1h-2zM1576,384h1v1h-1zM1577,385h9v1h-9z"/>
<rect x="684" y="437" width="182" height="3" fill="#0000d8"/>
<path fill="#0000d8" d="M692,436h12v1h-12zM706,436h9v1h-9zM717,436h22v1h-22zM741,436h7v1h-7zM750,436h31v1h-31zM783,436h18v1h-18zM803,436h9v1h-9zM815,436h26v1h-26zM843,436h6v1h-6zM851,436h9v1h-9zM862,436h2v1h-2z"/>
<path fill="#c01030" d="M684,436h8v4h-8zM708,439h9v1h-9zM742,439h14v1h-14zM771,438h5v2h-5zM802,439h12v1h-12zM831,438h26v3h-26z"/>
<path fill="#fff" d="M727,437h2v1h-2zM761,437h2v1h-2zM823,437h2v1h-2zM858,437h2v1h-2z"/>
<rect x="857" y="440" width="198" height="2" fill="#0000d8"/>
<rect x="1055" y="440" width="21" height="2" fill="#d01010"/>
<rect x="1076" y="442" width="195" height="1" fill="#ffffdc"/>
<rect x="1076" y="443" width="195" height="1" fill="#ffffa0"/>
<rect x="931" y="444" width="124" height="1" fill="#58b058"/>
<rect x="1055" y="444" width="215" height="1" fill="#2020a0"/>
<path fill="#3030b0" d="M1135,445h2v1h-2zM1138,445h1v1h-1zM1151,445h1v1h-1zM1162,445h1v1h-1zM1174,445h1v1h-1zM1190,445h1v1h-1zM1203,445h2v1h-2zM1210,445h3v1h-3zM1220,445h6v1h-6zM1235,445h4v1h-4zM1245,445h2v1h-2zM1252,445h3v1h-3zM1264,445h4v1h-4z"/>
<path fill="#c02040" d="M1181,445h2v1h-2zM1221,445h4v1h-4zM1236,445h3v1h-3zM1254,445h2v1h-2z"/>
<rect x="1270" y="445" width="237" height="4" fill="#0000d8"/>
<path fill="#fff" d="M1277,446h11v2h-11zM1290,446h8v2h-8zM1302,446h2v2h-2zM1308,446h2v2h-2zM1319,446h2v2h-2zM1334,446h2v1h-2z"/>
<rect x="1335" y="445" width="45" height="2" fill="#7a3098"/>
<path fill="#10b010" d="M682,478h1v3h-1zM683,477h1v4h-1zM684,478h14v2h-14zM698,477h1v3h-1zM699,478h1v2h-1zM700,478h1v3h-1zM701,477h1v4h-1zM702,478h1v2h-1zM703,477h6v3h-6zM709,478h4v2h-4zM713,477h2v3h-2zM715,478h1v3h-1zM716,478h2v2h-2zM718,478h1v3h-1zM719,478h9v2h-9zM728,477h6v3h-6zM734,478h4v2h-4zM738,477h1v3h-1zM739,478h8v2h-8zM747,477h1v3h-1zM748,478h10v2h-10zM758,477h2v3h-2zM760,478h7v2h-7zM767,477h1v3h-1zM768,478h1v2h-1zM769,477h1v3h-1zM770,478h5v2h-5zM775,477h3v3h-3zM778,478h2v3h-2zM780,478h3v2h-3zM783,477h2v3h-2zM785,478h8v2h-8zM793,477h1v3h-1zM794,478h1v2h-1zM795,477h1v3h-1zM796,478h1v2h-1zM797,477h1v3h-1zM798,478h8v2h-8zM806,477h1v3h-1zM807,478h2v2h-2zM809,477h2v3h-2zM811,478h3v2h-3zM814,477h1v3h-1zM815,478h3v2h-3zM818,478h1v3h-1zM819,478h1v2h-1zM820,478h1v3h-1zM821,479h1v3h-1zM822,480h2v2h-2zM824,480h2v3h-2zM826,478h1v4h-1zM827,478h2v2h-2zM829,477h1v4h-1zM830,478h1v3h-1zM831,478h1v2h-1zM832,477h2v3h-2zM834,478h3v2h-3zM837,478h1v3h-1zM838,478h12v2h-12zM850,477h1v5h-1zM851,479h1v6h-1zM852,482h2v6h-2zM854,480h1v5h-1zM855,477h1v5h-1zM856,475h2v4h-2zM858,477h1v3h-1zM859,478h1v4h-1zM860,476h1v6h-1zM861,472h1v7h-1zM862,470h1v5h-1zM863,469h1v3h-1zM864,468h1v4h-1zM865,467h1v3h-1zM866,466h1v3h-1zM867,466h1v2h-1zM868,465h1v3h-1zM869,464h1v3h-1zM870,463h1v3h-1zM871,463h1v2h-1zM872,461h1v4h-1zM873,461h1v3h-1zM874,461h1v2h-1zM875,460h1v3h-1zM876,460h2v2h-2zM878,459h1v3h-1zM879,459h2v2h-2zM881,458h1v3h-1zM882,458h3v2h-3zM885,456h1v4h-1zM886,456h1v3h-1zM887,455h1v3h-1zM888,454h1v3h-1zM889,453h1v3h-1zM890,453h1v2h-1zM891,452h3v3h-3zM894,452h6v2h-6zM900,451h3v3h-3zM903,450h1v3h-1zM904,450h1v2h-1zM905,449h1v3h-1zM906,450h3v2h-3zM909,449h1v3h-1zM910,450h1v2h-1zM911,449h3v3h-3zM914,447h1v5h-1zM915,446h1v4h-1zM916,447h1v2h-1zM917,447h1v3h-1zM918,447h4v2h-4zM922,446h2v3h-2zM924,447h1v2h-1zM925,446h2v3h-2zM927,447h2v2h-2zM929,444h1v5h-1zM930,443h1v4h-1zM931,444h1v2h-1z"/>
<path fill="#10b010" d="M1379,445h4v2h-4zM1383,444h2v3h-2zM1385,445h1v2h-1zM1386,444h1v3h-1zM1387,445h2v2h-2zM1389,444h2v3h-2zM1391,445h2v2h-2zM1393,444h2v3h-2zM1395,445h1v2h-1zM1396,444h1v3h-1zM1397,445h3v2h-3zM1400,444h1v3h-1zM1401,444h2v4h-2zM1403,444h3v3h-3zM1406,445h1v2h-1zM1407,444h1v3h-1zM1408,445h4v2h-4zM1412,444h1v3h-1zM1413,445h1v2h-1zM1414,444h3v3h-3zM1417,445h1v2h-1zM1418,444h2v3h-2zM1420,445h6v2h-6zM1426,444h1v3h-1zM1427,445h2v2h-2zM1429,444h2v3h-2zM1431,445h3v2h-3zM1434,444h2v3h-2zM1436,445h4v2h-4zM1440,444h1v3h-1zM1441,445h2v2h-2zM1443,444h2v3h-2zM1445,445h6v2h-6zM1451,444h2v3h-2zM1453,445h3v2h-3zM1456,445h1v3h-1zM1457,445h1v2h-1zM1458,444h3v3h-3zM1461,445h2v2h-2zM1463,444h1v3h-1zM1464,445h1v2h-1zM1465,444h1v3h-1zM1466,445h3v2h-3zM1469,444h1v3h-1zM1470,445h1v2h-1zM1471,444h2v3h-2zM1473,445h2v2h-2zM1475,444h1v3h-1zM1476,445h5v2h-5zM1481,444h1v3h-1zM1482,445h1v2h-1zM1483,444h1v3h-1zM1484,445h1v2h-1zM1485,445h1v3h-1zM1486,444h1v3h-1zM1487,445h2v2h-2zM1489,444h1v3h-1zM1490,445h6v2h-6zM1496,444h1v3h-1zM1497,445h6v2h-6zM1503,445h1v3h-1zM1504,445h2v2h-2zM1506,445h1v3h-1zM1507,446h1v4h-1zM1508,447h1v4h-1zM1509,449h1v5h-1zM1510,452h1v5h-1zM1511,455h1v2h-1zM1512,451h1v6h-1zM1513,449h1v5h-1zM1514,450h1v2h-1zM1515,449h1v3h-1zM1516,449h1v4h-1zM1517,451h1v2h-1zM1518,448h1v5h-1zM1519,445h1v5h-1zM1520,443h1v4h-1zM1521,441h1v4h-1zM1522,439h1v4h-1zM1523,437h1v5h-1zM1524,436h1v3h-1zM1525,434h1v4h-1zM1526,433h1v3h-1zM1527,433h1v2h-1zM1528,431h1v4h-1zM1529,431h1v3h-1zM1530,430h2v3h-2zM1532,429h1v3h-1zM1533,428h1v3h-1zM1534,427h1v4h-1zM1535,427h1v3h-1zM1536,427h1v2h-1zM1537,426h1v3h-1zM1538,425h1v4h-1zM1539,425h1v2h-1zM1540,424h1v3h-1zM1541,423h1v3h-1zM1542,422h1v3h-1zM1543,421h1v4h-1zM1544,422h1v2h-1zM1545,420h1v4h-1zM1546,421h1v2h-1zM1547,420h1v3h-1zM1548,420h2v2h-2zM1550,419h1v4h-1zM1551,419h1v2h-1zM1552,418h1v4h-1zM1553,417h2v3h-2zM1555,417h2v2h-2zM1557,416h1v3h-1zM1558,416h1v2h-1zM1559,415h2v3h-2zM1561,416h1v2h-1zM1562,415h1v3h-1zM1563,416h2v2h-2zM1565,415h1v3h-1zM1566,415h7v2h-7zM1573,414h1v3h-1zM1574,414h1v2h-1zM1575,413h1v3h-1zM1576,412h1v3h-1zM1577,413h2v2h-2zM1579,412h1v4h-1zM1580,412h1v3h-1zM1581,413h4v2h-4zM1585,412h1v4h-1z"/>
<path fill="#0000d8" d="M1507,445h1v3h-1zM1508,445h1v2h-1zM1509,445h1v4h-1zM1510,447h2v4h-2zM1512,447h1v3h-1zM1513,448h4v2h-4zM1517,447h1v3h-1zM1518,446h1v3h-1zM1519,445h1v3h-1zM1520,445h1v2h-1zM1521,445h1v3h-1zM1522,446h1v3h-1zM1523,447h1v3h-1zM1524,448h1v3h-1zM1525,449h1v2h-1zM1526,448h1v3h-1zM1527,448h1v2h-1zM1528,448h1v3h-1zM1529,449h1v4h-1zM1530,450h1v5h-1zM1531,452h1v5h-1zM1532,455h1v2h-1zM1533,452h1v5h-1zM1534,449h1v5h-1zM1535,446h1v5h-1zM1536,445h1v3h-1zM1537,445h1v4h-1zM1538,447h1v4h-1zM1539,446h1v5h-1zM1540,443h1v5h-1zM1541,441h1v4h-1zM1542,438h1v5h-1zM1543,436h1v4h-1zM1544,434h1v4h-1zM1545,434h1v2h-1zM1546,432h1v4h-1zM1547,432h1v3h-1zM1548,432h1v2h-1zM1549,430h1v4h-1zM1550,430h1v3h-1zM1551,431h1v2h-1zM1552,429h1v4h-1zM1553,427h1v4h-1zM1554,426h1v3h-1zM1555,425h1v3h-1zM1556,425h1v2h-1zM1557,424h1v3h-1zM1558,424h3v2h-3zM1561,423h1v3h-1zM1562,423h2v2h-2zM1564,422h1v3h-1zM1565,421h1v3h-1zM1566,420h1v4h-1zM1567,421h2v2h-2zM1569,420h1v3h-1zM1570,420h4v2h-4zM1574,419h1v3h-1zM1575,419h5v2h-5zM1580,418h1v3h-1zM1581,416h1v4h-1zM1582,414h1v4h-1zM1583,414h1v3h-1zM1584,415h2v2h-2z"/>
</g>
<rect x="1160" y="58" width="1" height="679" fill="#000"/>
<path class="aa" fill="#0000c8" d="M1578.3,56.5 L1582.6,48 L1587,56.5z"/>
<text transform="translate(1550.50,55.40) scale(0.95,1)" text-anchor="start" fill="#000" font-size="9.5">0.684</text>
<path class="aa" fill="#0000c8" d="M1528.3,739 L1536.8,739 L1532.5,747z"/>
<text transform="translate(1540.00,746.00) scale(0.95,1)" text-anchor="start" fill="#000" font-size="9.5">0.648</text>
<path class="aa" fill="#0000c8" d="M674.3,437.7 L682.6,442 L674.3,446.3z"/>
<rect x="687" y="437" width="26" height="6" fill="#fff"/>
<rect x="687" y="444" width="26" height="4" fill="#fff"/>
<text transform="translate(688.50,446.30) scale(0.95,1)" text-anchor="start" fill="#000" font-size="9.5">0.660</text>
<rect x="684" y="443" width="30" height="1" fill="#000"/>
<rect x="611" y="752" width="985" height="328" fill="#45608f"/>
<rect x="612" y="753" width="983" height="326" fill="#fff"/>
<rect x="683" y="763" width="903" height="258" fill="#c4c4c4"/>
<rect x="684" y="764" width="901" height="256" fill="#fff"/>
<rect x="675" y="765" width="8" height="1" fill="#c4c4c4"/>
<text transform="translate(669.50,770.00) scale(0.97,1)" text-anchor="end" fill="#1515a0" font-size="13">10.00</text>
<rect x="680" y="770" width="3" height="1" fill="#c4c4c4"/>
<rect x="680" y="775" width="3" height="1" fill="#c4c4c4"/>
<rect x="680" y="780" width="3" height="1" fill="#c4c4c4"/>
<rect x="680" y="785" width="3" height="1" fill="#c4c4c4"/>
<rect x="675" y="790" width="8" height="1" fill="#c4c4c4"/>
<text transform="translate(669.50,795.00) scale(0.97,1)" text-anchor="end" fill="#1515a0" font-size="13">8.00</text>
<rect x="680" y="795" width="3" height="1" fill="#c4c4c4"/>
<rect x="680" y="800" width="3" height="1" fill="#c4c4c4"/>
<rect x="680" y="805" width="3" height="1" fill="#c4c4c4"/>
<rect x="680" y="810" width="3" height="1" fill="#c4c4c4"/>
<rect x="675" y="816" width="8" height="1" fill="#c4c4c4"/>
<text transform="translate(669.50,821.00) scale(0.97,1)" text-anchor="end" fill="#1515a0" font-size="13">6.00</text>
<rect x="680" y="821" width="3" height="1" fill="#c4c4c4"/>
<rect x="680" y="826" width="3" height="1" fill="#c4c4c4"/>
<rect x="680" y="831" width="3" height="1" fill="#c4c4c4"/>
<rect x="680" y="836" width="3" height="1" fill="#c4c4c4"/>
<rect x="675" y="841" width="8" height="1" fill="#c4c4c4"/>
<text transform="translate(669.50,846.00) scale(0.97,1)" text-anchor="end" fill="#1515a0" font-size="13">4.00</text>
<rect x="680" y="846" width="3" height="1" fill="#c4c4c4"/>
<rect x="680" y="851" width="3" height="1" fill="#c4c4c4"/>
<rect x="680" y="856" width="3" height="1" fill="#c4c4c4"/>
<rect x="680" y="861" width="3" height="1" fill="#c4c4c4"/>
<rect x="675" y="866" width="8" height="1" fill="#c4c4c4"/>
<text transform="translate(669.50,871.00) scale(0.97,1)" text-anchor="end" fill="#1515a0" font-size="13">2.00</text>
<rect x="680" y="871" width="3" height="1" fill="#c4c4c4"/>
<rect x="680" y="876" width="3" height="1" fill="#c4c4c4"/>
<rect x="680" y="881" width="3" height="1" fill="#c4c4c4"/>
<rect x="680" y="886" width="3" height="1" fill="#c4c4c4"/>
<rect x="675" y="891" width="8" height="1" fill="#c4c4c4"/>
<text transform="translate(669.50,896.00) scale(0.97,1)" text-anchor="end" fill="#1515a0" font-size="13">0.00</text>
<rect x="680" y="896" width="3" height="1" fill="#c4c4c4"/>
<rect x="680" y="901" width="3" height="1" fill="#c4c4c4"/>
<rect x="680" y="906" width="3" height="1" fill="#c4c4c4"/>
<rect x="680" y="911" width="3" height="1" fill="#c4c4c4"/>
<rect x="675" y="916" width="8" height="1" fill="#c4c4c4"/>
<text transform="translate(669.50,921.00) scale(0.97,1)" text-anchor="end" fill="#1515a0" font-size="13">-2.00</text>
<rect x="680" y="922" width="3" height="1" fill="#c4c4c4"/>
<rect x="680" y="927" width="3" height="1" fill="#c4c4c4"/>
<rect x="680" y="932" width="3" height="1" fill="#c4c4c4"/>
<rect x="680" y="937" width="3" height="1" fill="#c4c4c4"/>
<rect x="675" y="942" width="8" height="1" fill="#c4c4c4"/>
<text transform="translate(669.50,947.00) scale(0.97,1)" text-anchor="end" fill="#1515a0" font-size="13">-4.00</text>
<rect x="680" y="947" width="3" height="1" fill="#c4c4c4"/>
<rect x="680" y="952" width="3" height="1" fill="#c4c4c4"/>
<rect x="680" y="957" width="3" height="1" fill="#c4c4c4"/>
<rect x="680" y="962" width="3" height="1" fill="#c4c4c4"/>
<rect x="675" y="967" width="8" height="1" fill="#c4c4c4"/>
<text transform="translate(669.50,972.00) scale(0.97,1)" text-anchor="end" fill="#1515a0" font-size="13">-6.00</text>
<rect x="680" y="972" width="3" height="1" fill="#c4c4c4"/>
<rect x="680" y="977" width="3" height="1" fill="#c4c4c4"/>
<rect x="680" y="982" width="3" height="1" fill="#c4c4c4"/>
<rect x="680" y="987" width="3" height="1" fill="#c4c4c4"/>
<rect x="675" y="992" width="8" height="1" fill="#c4c4c4"/>
<text transform="translate(669.50,997.00) scale(0.97,1)" text-anchor="end" fill="#1515a0" font-size="13">-8.00</text>
<rect x="680" y="997" width="3" height="1" fill="#c4c4c4"/>
<rect x="680" y="1002" width="3" height="1" fill="#c4c4c4"/>
<rect x="680" y="1007" width="3" height="1" fill="#c4c4c4"/>
<rect x="680" y="1012" width="3" height="1" fill="#c4c4c4"/>
<rect x="675" y="1018" width="8" height="1" fill="#c4c4c4"/>
<text transform="translate(669.50,1023.00) scale(0.97,1)" text-anchor="end" fill="#1515a0" font-size="13">-10.00</text>
<text transform="translate(624.60,891.00) rotate(-90) scale(0.887,1)" text-anchor="middle" fill="#1515a0" font-size="13">LambdaLabError-f(500)[2]</text>
<g clip-path="url(#clipL)">
<path fill="#0a0a8c" d="M713,763h1v2h-1zM714,764h1v2h-1zM715,765h1v2h-1zM716,766h8v1h-8zM724,766h1v2h-1zM725,767h20v1h-20zM745,767h1v2h-1zM746,768h1v2h-1zM747,769h1v2h-1zM748,770h1v2h-1zM749,771h1v2h-1zM750,772h1v2h-1zM751,773h1v2h-1zM752,774h12v1h-12zM764,774h1v2h-1zM765,775h10v1h-10zM775,774h1v2h-1zM776,774h21v1h-21zM797,774h1v2h-1zM798,775h16v1h-16zM814,774h1v2h-1zM815,774h26v1h-26zM841,774h1v2h-1zM842,775h16v1h-16zM858,775h1v2h-1zM859,776h2v1h-2zM861,776h1v2h-1zM862,777h2v1h-2zM864,777h1v2h-1zM865,778h3v1h-3zM868,778h1v2h-1zM869,779h62v1h-62zM931,778h1v2h-1zM932,777h1v2h-1zM933,776h1v2h-1zM934,775h1v2h-1zM935,775h1v1h-1zM936,774h1v2h-1zM937,773h1v2h-1zM938,772h1v2h-1zM939,772h1v1h-1zM940,771h1v2h-1zM941,771h105v1h-105zM1046,771h1v2h-1zM1047,772h2v1h-2zM1049,772h1v2h-1zM1050,773h1v1h-1zM1051,773h1v2h-1zM1052,774h1v2h-1zM1053,775h1v1h-1zM1054,775h1v2h-1zM1055,776h1v2h-1zM1056,777h1v1h-1zM1057,777h1v2h-1zM1058,778h30v1h-30zM1088,777h1v2h-1zM1089,776h1v2h-1zM1090,775h1v2h-1zM1091,774h1v2h-1zM1092,773h1v2h-1zM1093,772h1v2h-1zM1094,771h1v2h-1zM1095,770h1v2h-1zM1096,770h131v1h-131zM1227,769h1v2h-1zM1228,769h2v1h-2zM1230,768h1v2h-1zM1231,767h1v2h-1zM1232,766h1v2h-1zM1233,765h1v2h-1zM1234,764h1v2h-1zM1235,763h1v2h-1zM1236,763h1v1h-1z"/>
<path fill="#0a0a8c" d="M1267,763h1v2h-1zM1268,764h1v1h-1zM1269,764h1v2h-1zM1270,765h1v2h-1zM1271,766h1v1h-1zM1272,766h1v2h-1zM1273,767h1v1h-1zM1274,767h1v2h-1zM1275,768h85v1h-85zM1360,767h1v2h-1zM1361,767h7v1h-7zM1368,766h1v2h-1zM1369,766h1v1h-1zM1370,765h1v2h-1zM1371,764h1v2h-1zM1372,763h1v2h-1zM1373,763h2v1h-2z"/>
<path fill="#0a0a8c" d="M1409,763h2v1h-2zM1411,763h1v2h-1zM1412,764h2v1h-2zM1414,764h1v2h-1zM1415,765h89v1h-89zM1504,764h1v2h-1zM1505,764h7v1h-7zM1512,764h1v2h-1zM1513,765h1v2h-1zM1514,766h1v3h-1zM1515,768h1v2h-1zM1516,769h1v2h-1zM1517,770h1v2h-1zM1518,771h1v3h-1zM1519,773h1v2h-1zM1520,774h1v2h-1zM1521,775h1v2h-1zM1522,776h1v2h-1zM1523,777h1v2h-1zM1524,778h2v1h-2zM1526,777h1v2h-1zM1527,774h1v4h-1zM1528,771h1v4h-1zM1529,768h1v4h-1zM1530,768h1v1h-1zM1531,767h1v2h-1zM1532,767h1v1h-1zM1533,765h1v3h-1zM1534,764h1v2h-1zM1535,764h2v1h-2zM1537,764h1v3h-1zM1538,766h4v1h-4zM1542,766h1v2h-1zM1543,767h1v3h-1zM1544,769h1v3h-1zM1545,771h3v1h-3zM1548,770h1v2h-1zM1549,769h1v2h-1zM1550,769h1v1h-1zM1551,768h1v2h-1zM1552,768h1v1h-1zM1553,767h1v2h-1zM1554,767h1v1h-1zM1555,766h1v2h-1zM1556,766h4v1h-4zM1560,766h1v2h-1zM1561,767h2v1h-2zM1563,767h1v2h-1zM1564,768h1v1h-1zM1565,768h1v2h-1zM1566,769h2v1h-2zM1568,769h1v2h-1zM1569,770h2v1h-2zM1571,770h1v2h-1zM1572,771h3v1h-3zM1575,771h1v2h-1zM1576,772h3v1h-3zM1579,772h1v2h-1zM1580,773h3v1h-3zM1583,772h1v2h-1zM1584,772h2v1h-2z"/>
<path fill="#228b22" d="M684,841h65v1h-65zM749,840h1v2h-1zM750,840h2v1h-2zM752,839h1v2h-1zM753,839h1v1h-1zM754,838h1v2h-1zM755,837h1v2h-1zM756,837h1v1h-1zM757,836h1v2h-1zM758,835h1v2h-1zM759,835h1v1h-1zM760,834h1v2h-1zM761,834h2v1h-2zM763,833h1v2h-1zM764,833h42v1h-42zM806,832h2v2h-2zM808,833h7v1h-7zM815,833h1v2h-1zM816,834h1v1h-1zM817,834h1v2h-1zM818,835h1v2h-1zM819,836h2v2h-2zM821,837h1v2h-1zM822,838h1v1h-1zM823,837h1v2h-1zM824,836h2v2h-2zM826,837h1v1h-1zM827,836h1v2h-1zM828,836h2v1h-2zM830,836h1v2h-1zM831,837h1v2h-1zM832,838h1v1h-1zM833,838h1v2h-1zM834,839h1v2h-1zM835,840h1v1h-1zM836,840h1v2h-1zM837,841h1v2h-1zM838,842h1v2h-1zM839,843h1v2h-1zM840,844h1v1h-1zM841,844h1v2h-1zM842,844h1v3h-1zM843,845h1v3h-1zM844,847h1v1h-1zM845,847h2v2h-2zM847,847h1v1h-1zM848,845h1v3h-1zM849,842h1v4h-1zM850,841h1v2h-1zM851,841h1v1h-1zM852,840h1v2h-1zM853,839h1v2h-1zM854,838h1v2h-1zM855,837h1v2h-1zM856,836h1v2h-1zM857,836h1v3h-1zM858,838h1v2h-1zM859,839h2v1h-2zM861,838h1v2h-1zM862,838h3v1h-3zM865,837h1v2h-1zM866,837h2v1h-2zM868,836h1v2h-1zM869,835h1v2h-1zM870,835h1v1h-1zM871,835h1v2h-1zM872,836h2v1h-2zM874,836h1v2h-1zM875,837h2v1h-2zM877,837h1v2h-1zM878,838h2v1h-2zM880,838h1v2h-1zM881,839h2v1h-2zM883,839h1v2h-1zM884,840h2v1h-2zM886,839h1v3h-1zM887,840h1v2h-1zM888,840h1v1h-1zM889,839h1v2h-1zM890,839h2v1h-2zM892,838h1v2h-1zM893,838h1v1h-1zM894,837h1v2h-1zM895,837h1v1h-1zM896,836h1v2h-1zM897,836h2v1h-2zM899,835h1v2h-1zM900,835h1v1h-1zM901,834h1v2h-1zM902,834h1v1h-1zM903,833h1v2h-1zM904,833h1v3h-1zM905,834h1v2h-1zM906,835h1v2h-1zM907,836h1v1h-1zM908,836h1v2h-1zM909,837h1v1h-1zM910,837h1v2h-1zM911,838h2v1h-2zM913,837h1v2h-1zM914,837h1v1h-1zM915,836h1v2h-1zM916,836h1v1h-1zM917,835h1v2h-1zM918,835h1v1h-1zM919,834h2v2h-2zM921,835h1v1h-1zM922,835h1v2h-1zM923,836h1v2h-1zM924,837h1v1h-1zM925,837h1v2h-1zM926,838h5v1h-5zM931,837h1v2h-1zM932,837h2v1h-2zM934,836h1v2h-1zM935,836h13v1h-13zM948,836h1v2h-1zM949,837h1v2h-1zM950,837h1v3h-1zM951,838h1v2h-1zM952,839h1v2h-1zM953,840h1v2h-1zM954,841h1v2h-1zM955,842h3v2h-3zM958,843h31v1h-31zM989,843h1v2h-1zM990,844h1v2h-1zM991,845h1v2h-1zM992,846h1v1h-1zM993,846h1v2h-1zM994,847h1v2h-1zM995,848h1v2h-1zM996,849h1v1h-1zM997,848h1v2h-1zM998,848h1v1h-1zM999,847h1v2h-1zM1000,847h10v1h-10zM1010,846h1v2h-1zM1011,846h1v1h-1zM1012,846h1v2h-1zM1013,847h1v1h-1zM1014,847h1v2h-1zM1015,848h6v1h-6zM1021,847h1v2h-1zM1022,847h4v1h-4zM1026,847h1v2h-1zM1027,848h1v2h-1zM1028,849h14v1h-14zM1042,849h1v2h-1zM1043,850h2v1h-2zM1045,850h1v2h-1zM1046,851h25v1h-25zM1071,850h1v2h-1zM1072,851h8v1h-8zM1080,850h1v2h-1zM1081,850h12v1h-12zM1093,849h2v2h-2zM1095,850h1v1h-1zM1096,850h1v2h-1zM1097,851h6v1h-6zM1103,850h1v2h-1zM1104,850h33v1h-33zM1137,849h2v2h-2zM1139,850h79v1h-79zM1218,849h1v2h-1zM1219,850h28v1h-28zM1247,849h1v2h-1zM1248,850h16v1h-16zM1264,849h1v2h-1zM1265,850h9v1h-9zM1274,849h2v2h-2zM1276,850h8v1h-8zM1284,849h1v2h-1zM1285,850h19v1h-19zM1304,850h1v2h-1zM1305,851h5v1h-5zM1310,851h1v2h-1zM1311,852h3v1h-3zM1314,852h1v2h-1zM1315,853h1v1h-1zM1316,853h1v2h-1zM1317,854h1v1h-1zM1318,854h1v2h-1zM1319,855h1v1h-1zM1320,855h1v2h-1zM1321,856h36v1h-36zM1357,855h1v2h-1zM1358,856h69v1h-69zM1427,855h1v2h-1zM1428,856h4v1h-4zM1432,855h1v2h-1zM1433,855h1v1h-1zM1434,854h1v2h-1zM1435,854h1v1h-1zM1436,853h1v2h-1zM1437,853h1v1h-1zM1438,852h1v2h-1zM1439,852h1v1h-1zM1440,851h1v2h-1zM1441,850h1v2h-1zM1442,850h1v1h-1zM1443,849h1v2h-1zM1444,849h21v1h-21zM1465,848h2v2h-2zM1467,849h3v1h-3zM1470,848h1v2h-1zM1471,849h14v1h-14zM1485,849h1v2h-1zM1486,849h1v3h-1zM1487,850h1v2h-1zM1488,851h1v2h-1zM1489,852h1v2h-1zM1490,853h1v2h-1zM1491,854h1v1h-1zM1492,854h1v2h-1zM1493,855h1v2h-1zM1494,856h1v1h-1zM1495,856h1v2h-1zM1496,857h1v1h-1zM1497,857h1v2h-1zM1498,858h1v2h-1zM1499,859h1v1h-1zM1500,859h1v2h-1zM1501,860h1v2h-1zM1502,861h1v2h-1zM1503,862h2v2h-2zM1505,861h1v2h-1zM1506,860h1v2h-1zM1507,859h1v2h-1zM1508,858h1v2h-1zM1509,858h3v1h-3zM1512,857h1v2h-1zM1513,856h1v2h-1zM1514,856h1v1h-1zM1515,856h1v2h-1zM1516,857h1v2h-1zM1517,858h2v1h-2zM1519,857h1v2h-1zM1520,856h1v2h-1zM1521,855h1v2h-1zM1522,855h3v1h-3zM1525,853h1v3h-1zM1526,852h1v2h-1zM1527,851h1v2h-1zM1528,851h7v1h-7zM1535,851h2v2h-2zM1537,851h2v1h-2zM1539,850h1v2h-1zM1540,850h2v1h-2zM1542,849h1v2h-1zM1543,849h1v1h-1zM1544,848h1v2h-1zM1545,848h4v1h-4zM1549,847h1v2h-1zM1550,848h28v1h-28zM1578,847h1v3h-1zM1579,848h1v2h-1zM1580,849h1v2h-1zM1581,850h1v1h-1zM1582,850h1v2h-1zM1583,851h1v1h-1zM1584,851h1v2h-1zM1585,852h1v1h-1z"/>
<path fill="#801010" d="M684,860h1v1h-1zM685,859h1v2h-1zM686,859h3v1h-3zM689,859h1v2h-1zM690,860h63v1h-63zM753,859h1v2h-1zM754,859h2v1h-2zM756,859h1v2h-1zM757,860h64v1h-64zM821,859h2v2h-2zM823,860h12v1h-12zM835,860h1v2h-1zM836,861h1v1h-1zM837,861h1v2h-1zM838,862h1v1h-1zM839,862h1v2h-1zM840,863h1v1h-1zM841,863h1v2h-1zM842,864h141v1h-141zM983,863h1v2h-1zM984,864h16v1h-16zM1000,863h1v2h-1zM1001,864h62v1h-62zM1063,864h1v2h-1zM1064,865h1v1h-1zM1065,865h1v2h-1zM1066,866h1v1h-1zM1067,866h1v2h-1zM1068,867h1v1h-1zM1069,867h1v2h-1zM1070,868h1v2h-1zM1071,869h2v1h-2zM1073,869h1v2h-1zM1074,870h31v1h-31zM1105,870h1v2h-1zM1106,871h12v1h-12zM1118,870h2v2h-2zM1120,871h6v1h-6zM1126,870h1v2h-1zM1127,871h15v1h-15zM1142,870h1v2h-1zM1143,871h52v1h-52zM1195,870h1v2h-1zM1196,871h17v1h-17zM1213,870h1v2h-1zM1214,870h54v1h-54zM1268,869h1v2h-1zM1269,868h1v2h-1zM1270,867h1v2h-1zM1271,866h1v2h-1zM1272,865h1v2h-1zM1273,865h1v1h-1zM1274,864h1v2h-1zM1275,864h2v1h-2zM1277,863h1v2h-1zM1278,863h6v1h-6zM1284,862h1v3h-1zM1285,863h2v2h-2zM1287,863h42v1h-42zM1329,863h1v2h-1zM1330,864h4v1h-4zM1334,864h1v2h-1zM1335,865h6v1h-6zM1341,865h1v2h-1zM1342,866h1v1h-1zM1343,866h1v2h-1zM1344,867h1v1h-1zM1345,867h1v2h-1zM1346,868h30v1h-30zM1376,868h1v2h-1zM1377,869h4v1h-4zM1381,869h1v2h-1zM1382,870h4v1h-4zM1386,870h1v2h-1zM1387,871h2v1h-2zM1389,871h1v3h-1zM1390,873h1v2h-1zM1391,874h1v3h-1zM1392,876h1v3h-1zM1393,878h1v3h-1zM1394,880h1v4h-1zM1395,883h1v4h-1zM1396,886h1v4h-1zM1397,889h1v4h-1zM1398,892h1v3h-1zM1399,894h1v3h-1zM1400,896h1v3h-1zM1401,898h1v2h-1zM1402,899h1v2h-1zM1403,900h1v2h-1zM1404,901h2v2h-2zM1406,902h7v1h-7zM1413,901h1v2h-1zM1414,899h1v3h-1zM1415,898h1v2h-1zM1416,897h1v2h-1zM1417,895h1v3h-1zM1418,894h1v2h-1zM1419,893h1v2h-1zM1420,891h1v3h-1zM1421,890h1v2h-1zM1422,890h9v1h-9zM1431,890h1v2h-1zM1432,891h9v1h-9zM1441,891h1v2h-1zM1442,892h1v1h-1zM1443,892h2v2h-2zM1445,892h1v3h-1zM1446,894h9v1h-9zM1455,893h1v2h-1zM1456,892h1v2h-1zM1457,892h1v1h-1zM1458,891h1v2h-1zM1459,891h1v1h-1zM1460,890h1v2h-1zM1461,890h1v1h-1zM1462,889h1v2h-1zM1463,888h1v2h-1zM1464,888h5v1h-5zM1469,887h1v2h-1zM1470,887h1v1h-1zM1471,886h1v2h-1zM1472,886h2v1h-2zM1474,885h1v2h-1zM1475,885h1v1h-1zM1476,884h1v2h-1zM1477,884h10v1h-10zM1487,884h1v2h-1zM1488,885h7v1h-7zM1495,884h1v2h-1zM1496,884h2v1h-2zM1498,883h1v2h-1zM1499,883h8v1h-8zM1507,883h1v2h-1zM1508,884h5v1h-5zM1513,883h1v2h-1zM1514,883h1v1h-1zM1515,882h1v2h-1zM1516,882h1v1h-1zM1517,881h1v2h-1zM1518,880h1v2h-1zM1519,880h1v1h-1zM1520,879h1v2h-1zM1521,879h25v1h-25zM1546,879h1v2h-1zM1547,880h1v1h-1zM1548,880h1v2h-1zM1549,881h1v2h-1zM1550,882h1v1h-1zM1551,882h1v2h-1zM1552,883h1v1h-1zM1553,883h1v2h-1zM1554,884h1v1h-1zM1555,884h1v2h-1zM1556,885h8v1h-8zM1564,884h1v2h-1zM1565,884h4v1h-4zM1569,884h1v2h-1zM1570,885h10v1h-10zM1580,884h1v2h-1zM1581,884h5v1h-5z"/>
</g>
<rect x="1160" y="764" width="1" height="256" fill="#000"/>
<path class="aa" fill="#0000c8" d="M684.2,754 L684.2,762 L689,762z"/>
<text transform="translate(692.30,761.80) scale(0.95,1)" text-anchor="start" fill="#000" font-size="9.5">10.76</text>
<path class="aa" fill="#0000c8" d="M674.3,765.8 L683,770 L674.3,774.3z"/>
<text transform="translate(689.30,773.80) scale(0.95,1)" text-anchor="start" fill="#000" font-size="9.5">9.62</text>
<path class="aa" fill="#0000c8" d="M908.4,1022.3 L916,1022.3 L912.2,1029.4z"/>
<text transform="translate(920.00,1028.80) scale(0.95,1)" text-anchor="start" fill="#000" font-size="9.5">8.86</text>
<rect x="684" y="1030" width="903" height="1" fill="#000"/>
<rect x="700" y="1031" width="1" height="4" fill="#000"/>
<rect x="718" y="1031" width="1" height="4" fill="#000"/>
<rect x="736" y="1031" width="1" height="9" fill="#000"/>
<text transform="translate(736.50,1052.00) scale(0.975,1)" text-anchor="middle" fill="#000" font-size="13">13:33:15.000</text>
<rect x="754" y="1031" width="1" height="4" fill="#000"/>
<rect x="771" y="1031" width="1" height="4" fill="#000"/>
<rect x="789" y="1031" width="1" height="4" fill="#000"/>
<rect x="807" y="1031" width="1" height="4" fill="#000"/>
<rect x="825" y="1031" width="1" height="9" fill="#000"/>
<text transform="translate(825.50,1052.00) scale(0.975,1)" text-anchor="middle" fill="#000" font-size="13">13:33:20.000</text>
<rect x="842" y="1031" width="1" height="4" fill="#000"/>
<rect x="860" y="1031" width="1" height="4" fill="#000"/>
<rect x="878" y="1031" width="1" height="4" fill="#000"/>
<rect x="896" y="1031" width="1" height="4" fill="#000"/>
<rect x="913" y="1031" width="1" height="9" fill="#000"/>
<text transform="translate(913.50,1052.00) scale(0.975,1)" text-anchor="middle" fill="#000" font-size="13">13:33:25.000</text>
<rect x="931" y="1031" width="1" height="4" fill="#000"/>
<rect x="949" y="1031" width="1" height="4" fill="#000"/>
<rect x="967" y="1031" width="1" height="4" fill="#000"/>
<rect x="984" y="1031" width="1" height="4" fill="#000"/>
<rect x="1002" y="1031" width="1" height="9" fill="#000"/>
<text transform="translate(1002.50,1052.00) scale(0.975,1)" text-anchor="middle" fill="#000" font-size="13">13:33:30.000</text>
<rect x="1020" y="1031" width="1" height="4" fill="#000"/>
<rect x="1038" y="1031" width="1" height="4" fill="#000"/>
<rect x="1055" y="1031" width="1" height="4" fill="#000"/>
<rect x="1073" y="1031" width="1" height="4" fill="#000"/>
<rect x="1091" y="1031" width="1" height="9" fill="#000"/>
<text transform="translate(1091.50,1052.00) scale(0.975,1)" text-anchor="middle" fill="#000" font-size="13">13:33:35.000</text>
<rect x="1109" y="1031" width="1" height="4" fill="#000"/>
<rect x="1127" y="1031" width="1" height="4" fill="#000"/>
<rect x="1144" y="1031" width="1" height="4" fill="#000"/>
<rect x="1162" y="1031" width="1" height="4" fill="#000"/>
<rect x="1180" y="1031" width="1" height="9" fill="#000"/>
<text transform="translate(1180.50,1052.00) scale(0.975,1)" text-anchor="middle" fill="#000" font-size="13">13:33:40.000</text>
<rect x="1198" y="1031" width="1" height="4" fill="#000"/>
<rect x="1215" y="1031" width="1" height="4" fill="#000"/>
<rect x="1233" y="1031" width="1" height="4" fill="#000"/>
<rect x="1251" y="1031" width="1" height="4" fill="#000"/>
<rect x="1269" y="1031" width="1" height="9" fill="#000"/>
<text transform="translate(1269.50,1052.00) scale(0.975,1)" text-anchor="middle" fill="#000" font-size="13">13:33:45.000</text>
<rect x="1286" y="1031" width="1" height="4" fill="#000"/>
<rect x="1304" y="1031" width="1" height="4" fill="#000"/>
<rect x="1322" y="1031" width="1" height="4" fill="#000"/>
<rect x="1340" y="1031" width="1" height="4" fill="#000"/>
<rect x="1357" y="1031" width="1" height="9" fill="#000"/>
<text transform="translate(1357.50,1052.00) scale(0.975,1)" text-anchor="middle" fill="#000" font-size="13">13:33:50.000</text>
<rect x="1375" y="1031" width="1" height="4" fill="#000"/>
<rect x="1393" y="1031" width="1" height="4" fill="#000"/>
<rect x="1411" y="1031" width="1" height="4" fill="#000"/>
<rect x="1428" y="1031" width="1" height="4" fill="#000"/>
<rect x="1446" y="1031" width="1" height="9" fill="#000"/>
<text transform="translate(1446.50,1052.00) scale(0.975,1)" text-anchor="middle" fill="#000" font-size="13">13:33:55.000</text>
<rect x="1464" y="1031" width="1" height="4" fill="#000"/>
<rect x="1482" y="1031" width="1" height="4" fill="#000"/>
<rect x="1499" y="1031" width="1" height="4" fill="#000"/>
<rect x="1517" y="1031" width="1" height="4" fill="#000"/>
<rect x="1535" y="1031" width="1" height="9" fill="#000"/>
<text transform="translate(1535.50,1052.00) scale(0.975,1)" text-anchor="middle" fill="#000" font-size="13">13:34:00.000</text>
<rect x="1553" y="1031" width="1" height="4" fill="#000"/>
<rect x="1571" y="1031" width="1" height="4" fill="#000"/>
<rect x="1160" y="1031" width="1" height="9" fill="#000"/>
<text transform="translate(617.00,1042.00) scale(0.925,1)" text-anchor="start" fill="#000" font-size="13">Time</text>
<text transform="translate(617.00,1056.00) scale(0.925,1)" text-anchor="start" fill="#000" font-size="13">(s)</text>
<rect x="684" y="1057" width="902" height="13" fill="#dde9fb"/>
<path class="aa" fill="#5b8fd2" d="M686,1063.5 L694,1059 L694,1068z"/>
<path class="aa" fill="#5b8fd2" d="M1584.5,1063.5 L1576,1059 L1576,1068z"/>
<rect x="1114" y="1058" width="48" height="11" fill="#6b96d6"/>
<rect x="1115" y="1059" width="46" height="9" fill="url(#gThumb)"/>
<rect x="1600" y="46" width="320" height="1034" fill="#45608f"/>
<rect x="1601" y="47" width="318" height="1032" fill="#fff"/>
<rect x="1610" y="57" width="300" height="680" fill="#c3c3c3"/>
<rect x="1611" y="58" width="298" height="678" fill="#fff"/>
<rect x="1611" y="106" width="142" height="15" fill="url(#gOrange)"/>
<rect x="1858" y="106" width="51" height="15" fill="url(#gOrange)"/>
<rect x="1610.5" y="105.5" width="143" height="16" fill="none" stroke="#f2cc96"/>
<rect x="1857.5" y="105.5" width="52" height="16" fill="none" stroke="#f2cc96"/>
<rect x="1610" y="73" width="300" height="1" fill="#c3c3c3"/>
<rect x="1610" y="89" width="300" height="1" fill="#c3c3c3"/>
<rect x="1610" y="105" width="300" height="1" fill="#c3c3c3"/>
<rect x="1610" y="121" width="300" height="1" fill="#c3c3c3"/>
<rect x="1610" y="137" width="300" height="1" fill="#c3c3c3"/>
<rect x="1753" y="57" width="1" height="81" fill="#c3c3c3"/>
<rect x="1857" y="57" width="1" height="81" fill="#c3c3c3"/>
<text transform="translate(1613.00,70.00) scale(0.945,1)" text-anchor="start" fill="#000" font-size="13">AFR_NTKa</text>
<rect x="1792" y="59" width="12" height="13" fill="#2fa52f"/>
<rect x="1793" y="60" width="10" height="11" fill="#fff"/>
<text transform="translate(1790.50,70.00) scale(0.97,1)" text-anchor="end" fill="#000" font-size="13">9.59</text>
<rect x="1844" y="59" width="12" height="13" fill="#a52a2a"/>
<rect x="1845" y="60" width="10" height="11" fill="#fff"/>
<text transform="translate(1842.50,70.00) scale(0.97,1)" text-anchor="end" fill="#000" font-size="13">9.59</text>
<rect x="1896" y="59" width="12" height="13" fill="#c8c8c8"/>
<rect x="1897" y="60" width="10" height="11" fill="#fff"/>
<text transform="translate(1894.50,70.00) scale(0.97,1)" text-anchor="end" fill="#000" font-size="13">9.61</text>
<text transform="translate(1613.00,86.00) scale(0.945,1)" text-anchor="start" fill="#000" font-size="13">ECMf</text>
<rect x="1792" y="75" width="12" height="13" fill="#2fa52f"/>
<rect x="1793" y="76" width="10" height="11" fill="#fff"/>
<text transform="translate(1790.50,86.00) scale(0.97,1)" text-anchor="end" fill="#000" font-size="13">0.638</text>
<rect x="1844" y="75" width="12" height="13" fill="#c8c8c8"/>
<rect x="1845" y="76" width="10" height="11" fill="#fff"/>
<text transform="translate(1842.50,86.00) scale(0.97,1)" text-anchor="end" fill="#000" font-size="13">0.648</text>
<rect x="1896" y="75" width="12" height="13" fill="#c8c8c8"/>
<rect x="1897" y="76" width="10" height="11" fill="#fff"/>
<text transform="translate(1894.50,86.00) scale(0.97,1)" text-anchor="end" fill="#000" font-size="13">0.601</text>
<text transform="translate(1613.00,102.00) scale(0.945,1)" text-anchor="start" fill="#000" font-size="13">ECMf-f(10)</text>
<rect x="1792" y="91" width="12" height="13" fill="#103010"/>
<rect x="1793" y="92" width="10" height="11" fill="#00b000"/>
<text transform="translate(1790.50,102.00) scale(0.97,1)" text-anchor="end" fill="#000" font-size="13">0.638</text>
<rect x="1844" y="91" width="12" height="13" fill="#300808"/>
<rect x="1845" y="92" width="10" height="11" fill="#c80000"/>
<text transform="translate(1842.50,102.00) scale(0.97,1)" text-anchor="end" fill="#000" font-size="13">0.648</text>
<rect x="1896" y="91" width="12" height="13" fill="#080830"/>
<rect x="1897" y="92" width="10" height="11" fill="#0000f0"/>
<text transform="translate(1894.50,102.00) scale(0.97,1)" text-anchor="end" fill="#000" font-size="13">0.601</text>
<text transform="translate(1613.00,118.00) scale(0.945,1)" text-anchor="start" fill="#000" font-size="13">LabNTKa_U12</text>
<rect x="1792" y="107" width="12" height="13" fill="#103010"/>
<rect x="1793" y="108" width="10" height="11" fill="#00b000"/>
<text transform="translate(1790.50,118.00) scale(0.97,1)" text-anchor="end" fill="#000" font-size="13">0.658</text>
<rect x="1844" y="107" width="12" height="13" fill="#300808"/>
<rect x="1845" y="108" width="10" height="11" fill="#c80000"/>
<text transform="translate(1842.50,118.00) scale(0.97,1)" text-anchor="end" fill="#000" font-size="13">0.658</text>
<rect x="1896" y="107" width="12" height="13" fill="#080830"/>
<rect x="1897" y="108" width="10" height="11" fill="#0000f0"/>
<text transform="translate(1894.50,118.00) scale(0.97,1)" text-anchor="end" fill="#000" font-size="13">0.659</text>
<rect x="1610.5" y="105.5" width="143" height="16" fill="none" stroke="#f2cc96"/>
<rect x="1857.5" y="105.5" width="52" height="16" fill="none" stroke="#f2cc96"/>
<text transform="translate(1613.00,134.00) scale(0.945,1)" text-anchor="start" fill="#000" font-size="13">Lam4RawL2C_R23</text>
<rect x="1792" y="123" width="12" height="13" fill="#2fa52f"/>
<rect x="1793" y="124" width="10" height="11" fill="#fff"/>
<text transform="translate(1790.50,134.00) scale(0.97,1)" text-anchor="end" fill="#000" font-size="13">0.663</text>
<rect x="1844" y="123" width="12" height="13" fill="#a52a2a"/>
<rect x="1845" y="124" width="10" height="11" fill="#fff"/>
<text transform="translate(1842.50,134.00) scale(0.97,1)" text-anchor="end" fill="#000" font-size="13">0.663</text>
<rect x="1896" y="123" width="12" height="13" fill="#2020a0"/>
<rect x="1897" y="124" width="10" height="11" fill="#fff"/>
<text transform="translate(1894.50,134.00) scale(0.97,1)" text-anchor="end" fill="#000" font-size="13">0.661</text>
<rect x="1610" y="763" width="300" height="257" fill="#c3c3c3"/>
<rect x="1611" y="764" width="298" height="255" fill="#fff"/>
<rect x="1611" y="828" width="130" height="15" fill="url(#gBlue)"/>
<rect x="1854" y="828" width="55" height="15" fill="url(#gBlue)"/>
<rect x="1610.5" y="827.5" width="131" height="16" fill="none" stroke="#7da2ce"/>
<rect x="1853.5" y="827.5" width="56" height="16" fill="none" stroke="#7da2ce"/>
<rect x="1610" y="779" width="300" height="1" fill="#c3c3c3"/>
<rect x="1610" y="795" width="300" height="1" fill="#c3c3c3"/>
<rect x="1610" y="811" width="300" height="1" fill="#c3c3c3"/>
<rect x="1610" y="827" width="300" height="1" fill="#c3c3c3"/>
<rect x="1610" y="843" width="300" height="1" fill="#c3c3c3"/>
<rect x="1610" y="859" width="300" height="1" fill="#c3c3c3"/>
<rect x="1610" y="875" width="300" height="1" fill="#c3c3c3"/>
<rect x="1610" y="891" width="300" height="1" fill="#c3c3c3"/>
<rect x="1741" y="763" width="1" height="129" fill="#c3c3c3"/>
<rect x="1853" y="763" width="1" height="129" fill="#c3c3c3"/>
<text transform="translate(1613.00,776.00) scale(0.945,1)" text-anchor="start" fill="#000" font-size="13">% O2</text>
<rect x="1784" y="765" width="12" height="13" fill="#2fa52f"/>
<rect x="1785" y="766" width="10" height="11" fill="#fff"/>
<text transform="translate(1782.50,776.00) scale(0.97,1)" text-anchor="end" fill="#000" font-size="13">20.54</text>
<rect x="1840" y="765" width="12" height="13" fill="#c8c8c8"/>
<rect x="1841" y="766" width="10" height="11" fill="#fff"/>
<text transform="translate(1838.50,776.00) scale(0.97,1)" text-anchor="end" fill="#000" font-size="13">20.42</text>
<rect x="1896" y="765" width="12" height="13" fill="#c8c8c8"/>
<rect x="1897" y="766" width="10" height="11" fill="#fff"/>
<text transform="translate(1894.50,776.00) scale(0.97,1)" text-anchor="end" fill="#000" font-size="13">20.54</text>
<text transform="translate(1613.00,792.00) scale(0.945,1)" text-anchor="start" fill="#000" font-size="13">ExPressL2C_R11</text>
<rect x="1784" y="781" width="12" height="13" fill="#2fa52f"/>
<rect x="1785" y="782" width="10" height="11" fill="#fff"/>
<text transform="translate(1782.50,792.00) scale(0.97,1)" text-anchor="end" fill="#000" font-size="13">10</text>
<rect x="1840" y="781" width="12" height="13" fill="#c8c8c8"/>
<rect x="1841" y="782" width="10" height="11" fill="#fff"/>
<text transform="translate(1838.50,792.00) scale(0.97,1)" text-anchor="end" fill="#000" font-size="13">12</text>
<rect x="1896" y="781" width="12" height="13" fill="#c8c8c8"/>
<rect x="1897" y="782" width="10" height="11" fill="#fff"/>
<text transform="translate(1894.50,792.00) scale(0.97,1)" text-anchor="end" fill="#000" font-size="13">10</text>
<text transform="translate(1613.00,808.00) scale(0.945,1)" text-anchor="start" fill="#000" font-size="13">LamLabOK</text>
<rect x="1784" y="797" width="12" height="13" fill="#2fa52f"/>
<rect x="1785" y="798" width="10" height="11" fill="#fff"/>
<text transform="translate(1782.50,808.00) scale(0.97,1)" text-anchor="end" fill="#000" font-size="13">####</text>
<rect x="1840" y="797" width="12" height="13" fill="#c8c8c8"/>
<rect x="1841" y="798" width="10" height="11" fill="#fff"/>
<text transform="translate(1838.50,808.00) scale(0.97,1)" text-anchor="end" fill="#000" font-size="13">####</text>
<rect x="1896" y="797" width="12" height="13" fill="#c8c8c8"/>
<rect x="1897" y="798" width="10" height="11" fill="#fff"/>
<text transform="translate(1894.50,808.00) scale(0.97,1)" text-anchor="end" fill="#000" font-size="13">####</text>
<text transform="translate(1613.00,824.00) scale(0.945,1)" text-anchor="start" fill="#000" font-size="13">LambdaLabError</text>
<rect x="1784" y="813" width="12" height="13" fill="#2fa52f"/>
<rect x="1785" y="814" width="10" height="11" fill="#fff"/>
<text transform="translate(1782.50,824.00) scale(0.97,1)" text-anchor="end" fill="#000" font-size="13">3.14</text>
<rect x="1840" y="813" width="12" height="13" fill="#c8c8c8"/>
<rect x="1841" y="814" width="10" height="11" fill="#fff"/>
<text transform="translate(1838.50,824.00) scale(0.97,1)" text-anchor="end" fill="#000" font-size="13">1.59</text>
<rect x="1896" y="813" width="12" height="13" fill="#c8c8c8"/>
<rect x="1897" y="814" width="10" height="11" fill="#fff"/>
<text transform="translate(1894.50,824.00) scale(0.97,1)" text-anchor="end" fill="#000" font-size="13">9.66</text>
<text transform="translate(1613.00,840.00) scale(0.945,1)" text-anchor="start" fill="#000" font-size="13">LambdaLabError-f(500)</text>
<rect x="1784" y="829" width="12" height="13" fill="#103010"/>
<rect x="1785" y="830" width="10" height="11" fill="#00b000"/>
<text transform="translate(1782.50,840.00) scale(0.97,1)" text-anchor="end" fill="#000" font-size="13">3.22</text>
<rect x="1840" y="829" width="12" height="13" fill="#300808"/>
<rect x="1841" y="830" width="10" height="11" fill="#c80000"/>
<text transform="translate(1838.50,840.00) scale(0.97,1)" text-anchor="end" fill="#000" font-size="13">1.66</text>
<rect x="1896" y="829" width="12" height="13" fill="#080830"/>
<rect x="1897" y="830" width="10" height="11" fill="#0000f0"/>
<text transform="translate(1894.50,840.00) scale(0.97,1)" text-anchor="end" fill="#000" font-size="13">9.60</text>
<rect x="1610.5" y="827.5" width="131" height="16" fill="none" stroke="#7da2ce"/>
<rect x="1853.5" y="827.5" width="56" height="16" fill="none" stroke="#7da2ce"/>
<text transform="translate(1613.00,856.00) scale(0.945,1)" text-anchor="start" fill="#000" font-size="13">bap</text>
<rect x="1784" y="845" width="12" height="13" fill="#2fa52f"/>
<rect x="1785" y="846" width="10" height="11" fill="#fff"/>
<text transform="translate(1782.50,856.00) scale(0.97,1)" text-anchor="end" fill="#000" font-size="13">1006</text>
<rect x="1840" y="845" width="12" height="13" fill="#c8c8c8"/>
<rect x="1841" y="846" width="10" height="11" fill="#fff"/>
<text transform="translate(1838.50,856.00) scale(0.97,1)" text-anchor="end" fill="#000" font-size="13">1003</text>
<rect x="1896" y="845" width="12" height="13" fill="#c8c8c8"/>
<rect x="1897" y="846" width="10" height="11" fill="#fff"/>
<text transform="translate(1894.50,856.00) scale(0.97,1)" text-anchor="end" fill="#000" font-size="13">1006</text>
<text transform="translate(1613.00,872.00) scale(0.945,1)" text-anchor="start" fill="#000" font-size="13">egt1</text>
<rect x="1784" y="861" width="12" height="13" fill="#2fa52f"/>
<rect x="1785" y="862" width="10" height="11" fill="#fff"/>
<text transform="translate(1782.50,872.00) scale(0.97,1)" text-anchor="end" fill="#000" font-size="13">15</text>
<rect x="1840" y="861" width="12" height="13" fill="#c8c8c8"/>
<rect x="1841" y="862" width="10" height="11" fill="#fff"/>
<text transform="translate(1838.50,872.00) scale(0.97,1)" text-anchor="end" fill="#000" font-size="13">19</text>
<rect x="1896" y="861" width="12" height="13" fill="#c8c8c8"/>
<rect x="1897" y="862" width="10" height="11" fill="#fff"/>
<text transform="translate(1894.50,872.00) scale(0.97,1)" text-anchor="end" fill="#000" font-size="13">15</text>
<text transform="translate(1613.00,888.00) scale(0.945,1)" text-anchor="start" fill="#000" font-size="13">egt2</text>
<rect x="1784" y="877" width="12" height="13" fill="#2fa52f"/>
<rect x="1785" y="878" width="10" height="11" fill="#fff"/>
<text transform="translate(1782.50,888.00) scale(0.97,1)" text-anchor="end" fill="#000" font-size="13">70</text>
<rect x="1840" y="877" width="12" height="13" fill="#c8c8c8"/>
<rect x="1841" y="878" width="10" height="11" fill="#fff"/>
<text transform="translate(1838.50,888.00) scale(0.97,1)" text-anchor="end" fill="#000" font-size="13">78</text>
<rect x="1896" y="877" width="12" height="13" fill="#c8c8c8"/>
<rect x="1897" y="878" width="10" height="11" fill="#fff"/>
<text transform="translate(1894.50,888.00) scale(0.97,1)" text-anchor="end" fill="#000" font-size="13">59</text>
</svg>
</body></html>
